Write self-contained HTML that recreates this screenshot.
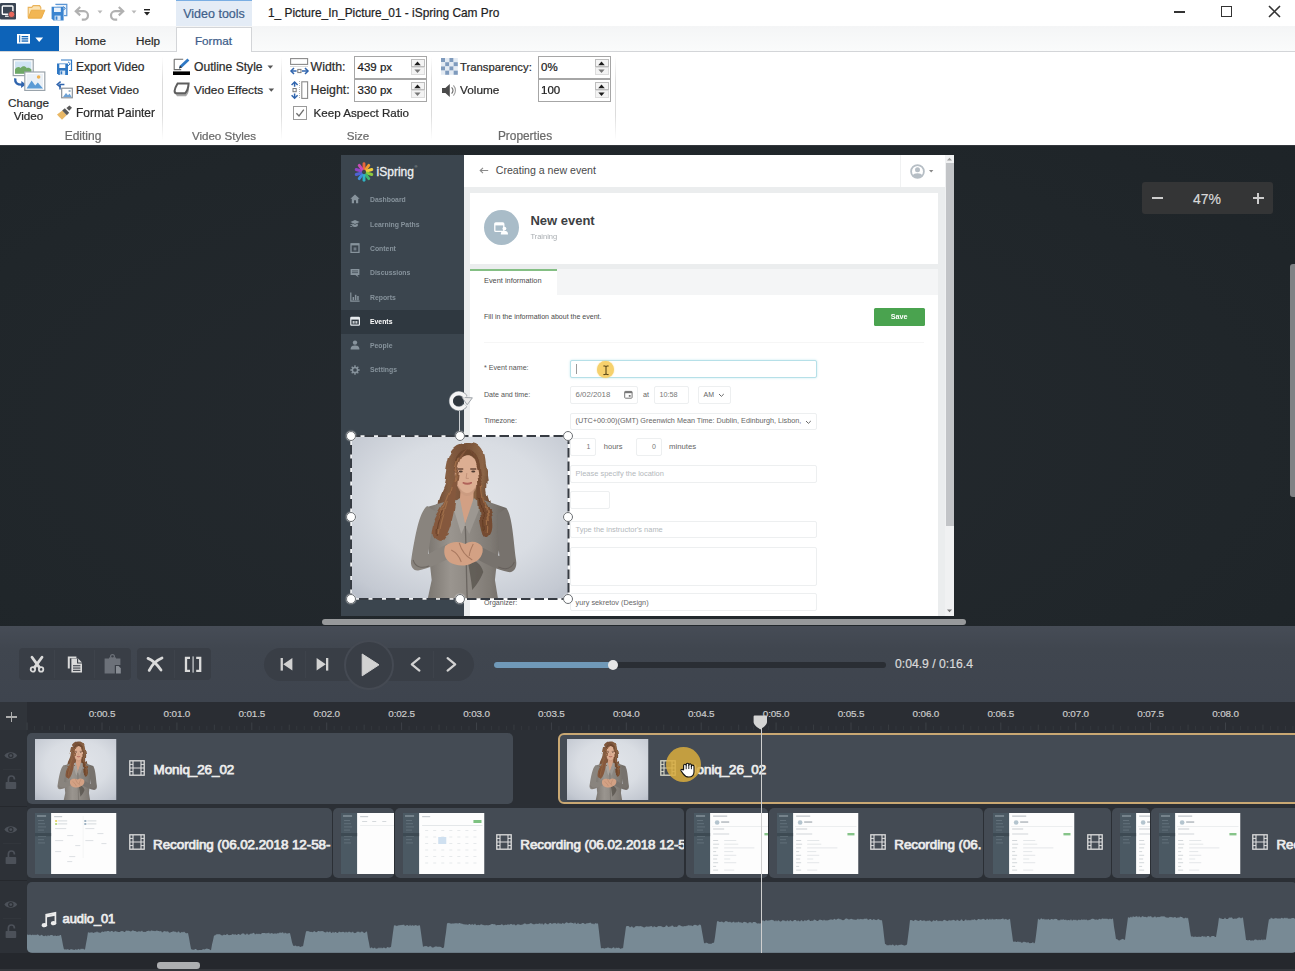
<!DOCTYPE html><html><head><meta charset="utf-8"><title>iSpring Cam Pro</title><style>html,body{margin:0;padding:0;background:#2b2f35}
body{width:1295px;height:971px;overflow:hidden;position:relative;font-family:"Liberation Sans",sans-serif;}
#r{position:absolute;left:0;top:0;width:1295px;height:971px;overflow:hidden}
#r div,#r svg{position:absolute;}
#r svg{overflow:visible}
#rb div{-webkit-text-stroke:.22px}
</style></head><body><svg width="0" height="0" style="position:absolute"><defs><symbol id="woman" viewBox="0 0 217 163" preserveAspectRatio="none">
<defs><radialGradient id="wbg" cx="52%" cy="42%" r="78%"><stop offset="0" stop-color="#e2e5ea"/><stop offset="0.5" stop-color="#d9dde3"/><stop offset="0.85" stop-color="#c4c9d2"/><stop offset="1" stop-color="#b4bac5"/></radialGradient>
<linearGradient id="shirt" x1="0" x2="1"><stop offset="0" stop-color="#7a756f"/><stop offset="0.3" stop-color="#9a958f"/><stop offset="0.55" stop-color="#8e8983"/><stop offset="0.8" stop-color="#807b75"/><stop offset="1" stop-color="#6c6762"/></linearGradient>
<linearGradient id="hair" x1="0" x2="1"><stop offset="0" stop-color="#5f3f2c"/><stop offset="0.3" stop-color="#875f43"/><stop offset="0.55" stop-color="#765037"/><stop offset="0.8" stop-color="#8c6546"/><stop offset="1" stop-color="#5a3b29"/></linearGradient>
<filter id="wavy" x="-10%" y="-5%" width="120%" height="110%"><feTurbulence type="fractalNoise" baseFrequency="0.035 0.06" numOctaves="2" seed="4" result="n"/><feDisplacementMap in="SourceGraphic" in2="n" scale="7" xChannelSelector="R" yChannelSelector="G"/></filter><filter id="wsoft" x="-5%" y="-5%" width="110%" height="110%"><feGaussianBlur stdDeviation="0.7"/></filter></defs>
<rect width="217" height="163" fill="url(#wbg)"/>
<g filter="url(#wsoft)">
<!-- hair back -->
<path filter="url(#wavy)" d="M115.5 7 C125 6 132 12 133 24 C134 34 137.5 42 136 50 C135 58 141 64 139.5 72 C138.5 80 145 87 143 96 C141 103 135 104 131 101 L127 70 L104 70 C100 86 97 100 91 107 C83 108 75 102 77.5 92 C78.5 84 85 77 86.5 67 C87.5 59 93.5 51 94.5 44 C95.5 36 97 28 98.5 22 C101 12 108 7 115.5 7Z" fill="url(#hair)"/>
<!-- torso -->
<path d="M100 64 L76 71 C74 90 78 120 80.5 144 L76.5 163 L146.7 163 L143.6 144 C146 120 152 90 155 72 L132 64Z" fill="url(#shirt)"/>
<!-- neck / chest -->
<path d="M109.5 50 L108.5 66 L113.5 89 L122 68 L122.5 50Z" fill="#d2a084"/>
<path d="M108.5 62 L101 68 L110 98 L114 89Z" fill="#a9a49e"/><path d="M122.5 62 L130 68 L118 98 L113.5 89Z" fill="#9c9791"/>
<path d="M114 90 C115 110 115 140 116 163" stroke="#6a6560" stroke-width="1.3" fill="none"/>
<!-- shadow fold below hands -->
<path d="M116 122 C124 124 130 128 132 136 C128 146 124 150 121 154 C120 144 118 134 116 122Z" fill="#55504b" opacity=".75"/>
<!-- face -->
<ellipse cx="115.8" cy="38" rx="12.2" ry="19" fill="#dcae92"/>
<path d="M104 40 C106 50 110 56 116 57.5 C122 56 126 50 127.6 40 C127 52 122 60 116 60 C110 60 105 52 104 40Z" fill="#c99a80" opacity=".7"/>
<path d="M106 33 h6 M119 33 h6" stroke="#6a4a3a" stroke-width="1.5"/>
<ellipse cx="109.5" cy="35.6" rx="2" ry="1" fill="#4f3a30"/><ellipse cx="122" cy="35.6" rx="2" ry="1" fill="#4f3a30"/>
<path d="M111.5 46.6 Q116 49.4 120.5 46.6 Q116 48 111.5 46.6Z" stroke="#b0635a" stroke-width="1.3" fill="#b0635a"/>
<path d="M115.6 37 L114.8 42.4 L117.6 42.4" stroke="#c08f76" stroke-width="0.9" fill="none"/>
<!-- hair crown + front strands -->
<path d="M103.5 36 C102 24 106 14 116 13.5 C125 14 129.5 24 128.4 36 C127 26 124 20 118 19 C110 19 105.5 26 103.5 36Z" fill="#6c462e"/>
<g filter="url(#wavy)"><path d="M116 13 C111 16 106 22 104.5 32 C103 44 98 51 96 60 C93 70 83 79 81 92 C80 100 84 105 90 106 C97 100 100 88 102.5 76 C105 64 104 52 106 42 C107 30 110 20 116 13Z" fill="#85593d"/>
<path d="M117 13 C123 17 127 24 128 34 C129 44 132 51 133 60 C135 70 142 78 141 90 C140.4 98 137 101 133 100.5 C130 92 128 82 127.4 72 C126.6 62 127.6 52 126.6 42 C125.6 30 122 20 117 13Z" fill="#744c31"/>
<path d="M100 50 C97 62 91 72 88 84 M96 66 C93 78 89 88 88 98 M131 50 C132 62 136 72 137 84 M134 70 C136 80 137 88 136 96 M108 22 C105 30 104 38 103 46" stroke="#a8744c" stroke-width="1.2" fill="none" opacity=".75"/>
<path d="M92 74 C88 84 85 92 86 100 M129 60 C130 72 133 82 133 94" stroke="#5c351f" stroke-width="1" fill="none" opacity=".7"/></g>
<!-- arms / hands -->
<path d="M76 70 C68 76 64 100 60.3 122.5 C58.5 130 62 135 67 134.5 C78 132 90 127 100 121 L96 108 C88 112 81 116 77 118 C79 104 82 86 85 76Z" fill="#89847e"/>
<path d="M155 72 C161 80 162 104 164.7 124.5 C166 132 162 137 157 136 C146 134 134 128 124 122 L128 110 C136 114 144 118 148 120 C147 106 146 88 146 78Z" fill="#77726d"/>
<path d="M62 124 C64 131 70 133 78 130 M163 126 C160 133 154 134 147 131" stroke="#5f5a55" stroke-width="1" fill="none" opacity=".7"/>
<path d="M94 110 C100 105 108 105 114 108 C120 104 128 106 131 111 C133 118 128 125 121 127 C114 131 104 130 98 126 C93 122 92 115 94 110Z" fill="#d3a184"/>
<path d="M108 107 C110 114 114 120 121 124 M100 114 C104 116 108 120 110 126 M122 108 C120 112 118 116 118 120" stroke="#a97960" stroke-width="1" fill="none"/>
</g>
</symbol><symbol id="shDash" viewBox="0 0 81 61" preserveAspectRatio="none"><rect width="81" height="61" fill="#fdfdfd"/><rect width="16" height="61" fill="#4b5963"/><rect x="2" y="2" width="9" height="2" fill="#75828b"/><rect x="3" y="7.0" width="6" height="1" fill="#62707a"/><rect x="3" y="10.2" width="7" height="1" fill="#62707a"/><rect x="3" y="13.4" width="8" height="1" fill="#62707a"/><rect x="3" y="16.6" width="6" height="1" fill="#62707a"/><rect x="3" y="19.8" width="7" height="1" fill="#62707a"/><rect x="3" y="23.0" width="8" height="1" fill="#62707a"/><rect x="3" y="26.2" width="6" height="1" fill="#62707a"/><rect x="3" y="29.4" width="7" height="1" fill="#62707a"/><rect x="0" y="20" width="16" height="3.2" fill="#3d4a53"/><rect x="19" y="3" width="8" height="1.2" fill="#c9ced2"/><rect x="20" y="7" width="2" height="2" fill="#e9d66b"/><rect x="23" y="7.4" width="9" height="1" fill="#d5d9dc"/><rect x="20" y="10" width="2" height="2" fill="#b9d98c"/><rect x="23" y="10.4" width="9" height="1" fill="#d5d9dc"/><rect x="49" y="7" width="2" height="2" fill="#9fb2c2"/><rect x="52" y="7.4" width="9" height="1" fill="#d5d9dc"/><rect x="49" y="10" width="2" height="2" fill="#9fb2c2"/><rect x="52" y="10.4" width="9" height="1" fill="#d5d9dc"/><rect x="20" y="15" width="11" height="1.1" fill="#dfe2e5"/><rect x="50" y="15" width="9" height="1.1" fill="#dfe2e5"/><rect x="32" y="22" width="6" height="1.1" fill="#dfe2e5"/><rect x="62" y="20" width="6" height="1.1" fill="#dfe2e5"/><rect x="20" y="27" width="8" height="1.1" fill="#dfe2e5"/><rect x="50" y="27" width="8" height="1.1" fill="#dfe2e5"/><rect x="40" y="32" width="5" height="1.1" fill="#dfe2e5"/><rect x="66" y="30" width="5" height="1.1" fill="#dfe2e5"/><rect x="20" y="38" width="6" height="1.1" fill="#dfe2e5"/><rect x="34" y="43" width="6" height="1.1" fill="#dfe2e5"/><rect x="32" y="48" width="5" height="1.1" fill="#dfe2e5"/><rect x="47.5" y="3" width="0.6" height="42" fill="#eef0f1"/></symbol><symbol id="shCal" viewBox="0 0 81 61" preserveAspectRatio="none"><rect width="81" height="61" fill="#fdfdfd"/><rect width="16" height="61" fill="#4b5963"/><rect x="2" y="2" width="9" height="2" fill="#75828b"/><rect x="3" y="7.0" width="6" height="1" fill="#62707a"/><rect x="3" y="10.2" width="7" height="1" fill="#62707a"/><rect x="3" y="13.4" width="8" height="1" fill="#62707a"/><rect x="3" y="16.6" width="6" height="1" fill="#62707a"/><rect x="3" y="19.8" width="7" height="1" fill="#62707a"/><rect x="3" y="23.0" width="8" height="1" fill="#62707a"/><rect x="3" y="26.2" width="6" height="1" fill="#62707a"/><rect x="3" y="29.4" width="7" height="1" fill="#62707a"/><rect x="0" y="20" width="16" height="3.2" fill="#3d4a53"/><rect x="19" y="3" width="8" height="1.2" fill="#c9ced2"/><rect x="70" y="7" width="8" height="3" fill="#7dc281"/><rect x="19" y="12" width="60" height="1" fill="#e4e7e9"/><rect x="22" y="17.0" width="3" height="1" fill="#e6e9eb"/><rect x="30" y="17.0" width="3" height="1" fill="#e6e9eb"/><rect x="38" y="17.0" width="3" height="1" fill="#e6e9eb"/><rect x="46" y="17.0" width="3" height="1" fill="#e6e9eb"/><rect x="54" y="17.0" width="3" height="1" fill="#e6e9eb"/><rect x="62" y="17.0" width="3" height="1" fill="#e6e9eb"/><rect x="70" y="17.0" width="3" height="1" fill="#e6e9eb"/><rect x="22" y="23.5" width="3" height="1" fill="#e6e9eb"/><rect x="30" y="23.5" width="3" height="1" fill="#e6e9eb"/><rect x="38" y="23.5" width="3" height="1" fill="#e6e9eb"/><rect x="46" y="23.5" width="3" height="1" fill="#e6e9eb"/><rect x="54" y="23.5" width="3" height="1" fill="#e6e9eb"/><rect x="62" y="23.5" width="3" height="1" fill="#e6e9eb"/><rect x="70" y="23.5" width="3" height="1" fill="#e6e9eb"/><rect x="22" y="30.0" width="3" height="1" fill="#e6e9eb"/><rect x="30" y="30.0" width="3" height="1" fill="#e6e9eb"/><rect x="38" y="30.0" width="3" height="1" fill="#e6e9eb"/><rect x="46" y="30.0" width="3" height="1" fill="#e6e9eb"/><rect x="54" y="30.0" width="3" height="1" fill="#e6e9eb"/><rect x="62" y="30.0" width="3" height="1" fill="#e6e9eb"/><rect x="70" y="30.0" width="3" height="1" fill="#e6e9eb"/><rect x="22" y="36.5" width="3" height="1" fill="#e6e9eb"/><rect x="30" y="36.5" width="3" height="1" fill="#e6e9eb"/><rect x="38" y="36.5" width="3" height="1" fill="#e6e9eb"/><rect x="46" y="36.5" width="3" height="1" fill="#e6e9eb"/><rect x="54" y="36.5" width="3" height="1" fill="#e6e9eb"/><rect x="62" y="36.5" width="3" height="1" fill="#e6e9eb"/><rect x="70" y="36.5" width="3" height="1" fill="#e6e9eb"/><rect x="22" y="43.0" width="3" height="1" fill="#e6e9eb"/><rect x="30" y="43.0" width="3" height="1" fill="#e6e9eb"/><rect x="38" y="43.0" width="3" height="1" fill="#e6e9eb"/><rect x="46" y="43.0" width="3" height="1" fill="#e6e9eb"/><rect x="54" y="43.0" width="3" height="1" fill="#e6e9eb"/><rect x="62" y="43.0" width="3" height="1" fill="#e6e9eb"/><rect x="70" y="43.0" width="3" height="1" fill="#e6e9eb"/><rect x="22" y="49.5" width="3" height="1" fill="#e6e9eb"/><rect x="30" y="49.5" width="3" height="1" fill="#e6e9eb"/><rect x="38" y="49.5" width="3" height="1" fill="#e6e9eb"/><rect x="46" y="49.5" width="3" height="1" fill="#e6e9eb"/><rect x="54" y="49.5" width="3" height="1" fill="#e6e9eb"/><rect x="62" y="49.5" width="3" height="1" fill="#e6e9eb"/><rect x="70" y="49.5" width="3" height="1" fill="#e6e9eb"/><rect x="35" y="24" width="8" height="7" fill="#cfe0f0"/></symbol><symbol id="shList" viewBox="0 0 81 61" preserveAspectRatio="none"><rect width="81" height="61" fill="#fdfdfd"/><rect width="16" height="61" fill="#4b5963"/><rect x="2" y="2" width="9" height="2" fill="#75828b"/><rect x="3" y="7.0" width="6" height="1" fill="#62707a"/><rect x="3" y="10.2" width="7" height="1" fill="#62707a"/><rect x="3" y="13.4" width="8" height="1" fill="#62707a"/><rect x="3" y="16.6" width="6" height="1" fill="#62707a"/><rect x="3" y="19.8" width="7" height="1" fill="#62707a"/><rect x="3" y="23.0" width="8" height="1" fill="#62707a"/><rect x="3" y="26.2" width="6" height="1" fill="#62707a"/><rect x="3" y="29.4" width="7" height="1" fill="#62707a"/><rect x="0" y="20" width="16" height="3.2" fill="#3d4a53"/><rect x="19" y="3" width="8" height="1.2" fill="#c9ced2"/><rect x="21" y="8" width="5" height="1" fill="#d5d9dc"/><rect x="31" y="8" width="4" height="1" fill="#d5d9dc"/><rect x="41" y="8" width="4" height="1" fill="#d5d9dc"/><rect x="19" y="12" width="60" height="0.8" fill="#e9ebed"/></symbol><symbol id="shForm" viewBox="0 0 81 61" preserveAspectRatio="none"><rect width="81" height="61" fill="#fdfdfd"/><rect width="16" height="61" fill="#4b5963"/><rect x="2" y="2" width="9" height="2" fill="#75828b"/><rect x="3" y="7.0" width="6" height="1" fill="#62707a"/><rect x="3" y="10.2" width="7" height="1" fill="#62707a"/><rect x="3" y="13.4" width="8" height="1" fill="#62707a"/><rect x="3" y="16.6" width="6" height="1" fill="#62707a"/><rect x="3" y="19.8" width="7" height="1" fill="#62707a"/><rect x="3" y="23.0" width="8" height="1" fill="#62707a"/><rect x="3" y="26.2" width="6" height="1" fill="#62707a"/><rect x="3" y="29.4" width="7" height="1" fill="#62707a"/><rect x="0" y="20" width="16" height="3.2" fill="#3d4a53"/><rect x="19" y="2.5" width="14" height="1.3" fill="#c3c8cc"/><circle cx="23" cy="9.5" r="2.3" fill="#b4c4ce"/><rect x="27" y="8.3" width="8" height="1.5" fill="#b4babf"/><rect x="18" y="13" width="61" height="1" fill="#eceeef"/><rect x="19" y="15.5" width="11" height="1" fill="#c9ced2"/><rect x="70" y="20" width="7" height="2.4" fill="#86c489"/><rect x="19" y="20.5" width="16" height="1" fill="#d2d6d9"/><rect x="19" y="27.0" width="5" height="1" fill="#d3d7da"/><rect x="30" y="27.0" width="12" height="1" fill="#e4e7e9"/><rect x="19" y="30.7" width="6" height="1" fill="#d3d7da"/><rect x="30" y="30.7" width="14" height="1" fill="#e4e7e9"/><rect x="19" y="34.4" width="5" height="1" fill="#d3d7da"/><rect x="30" y="34.4" width="30" height="1" fill="#e4e7e9"/><rect x="19" y="38.1" width="3" height="1" fill="#d3d7da"/><rect x="30" y="38.1" width="9" height="1" fill="#e4e7e9"/><rect x="19" y="41.8" width="5" height="1" fill="#d3d7da"/><rect x="30" y="41.8" width="12" height="1" fill="#e4e7e9"/><rect x="19" y="45.5" width="4" height="1" fill="#d3d7da"/><rect x="30" y="45.5" width="6" height="1" fill="#e4e7e9"/><rect x="19" y="49.2" width="5" height="1" fill="#d3d7da"/><rect x="30" y="49.2" width="12" height="1" fill="#e4e7e9"/><rect x="19" y="52.9" width="3" height="1" fill="#d3d7da"/><rect x="19" y="56.6" width="5" height="1" fill="#d3d7da"/><rect x="30" y="56.6" width="10" height="1" fill="#e4e7e9"/></symbol></defs></svg><div id="r">
<div style="left:0px;top:145px;width:1295px;height:481px;background:radial-gradient(ellipse 80% 100% at 45% 60%,#252a2f,#20262a 65%,#1d2327)"></div>
<div style="left:0px;top:145px;width:1295px;height:1px;background:#33373c"></div>
<div style="left:1142px;top:182px;width:131px;height:31.5px;background:#343536;border-radius:3px"></div>
<div style="left:1152px;top:197.4px;width:11.2px;height:2px;background:#cdcdcd"></div>
<div style="left:1057px;top:189px;height:20px;line-height:20px;font-size:14px;color:#d8d8d8;white-space:nowrap;width:300px;text-align:center;-webkit-text-stroke:.2px #d8d8d8;">47%</div>
<div style="left:1252.8px;top:197.4px;width:10.8px;height:2px;background:#cdcdcd"></div><div style="left:1257.2px;top:193px;width:2px;height:10.8px;background:#cdcdcd"></div>
<div style="left:0;top:0;width:1295px;height:971px;filter:blur(.35px)"><div style="left:341px;top:155px;width:613px;height:461px;background:#fff"></div><div style="left:341px;top:155px;width:123px;height:461px;background:#3b454e"></div><div style="left:341px;top:310px;width:123px;height:24px;background:#2f3840"></div><svg style="left:353.8px;top:161.8px;filter:blur(.45px);" width="20" height="20" viewBox="0 0 20 20"><path d="M10.0 6.6 L10.0 1.8" stroke="#e8663c" stroke-width="2.9" stroke-linecap="round"/><path d="M12.0 7.2 L14.8 3.4" stroke="#f09a2e" stroke-width="2.9" stroke-linecap="round"/><path d="M13.2 8.9 L17.8 7.5" stroke="#f2cf3e" stroke-width="2.9" stroke-linecap="round"/><path d="M13.2 11.1 L17.8 12.5" stroke="#8ccb3e" stroke-width="2.9" stroke-linecap="round"/><path d="M12.0 12.8 L14.8 16.6" stroke="#3fb56e" stroke-width="2.9" stroke-linecap="round"/><path d="M10.0 13.4 L10.0 18.2" stroke="#2fb3c4" stroke-width="2.9" stroke-linecap="round"/><path d="M8.0 12.8 L5.2 16.6" stroke="#3f8fdc" stroke-width="2.9" stroke-linecap="round"/><path d="M6.8 11.1 L2.2 12.5" stroke="#4f62d2" stroke-width="2.9" stroke-linecap="round"/><path d="M6.8 8.9 L2.2 7.5" stroke="#8f46c4" stroke-width="2.9" stroke-linecap="round"/><path d="M8.0 7.2 L5.2 3.4" stroke="#c84cb4" stroke-width="2.9" stroke-linecap="round"/></svg><div style="left:376.6px;top:162px;height:20px;line-height:20px;font-size:12px;color:#eef0f2;white-space:nowrap;-webkit-text-stroke:.3px #eef0f2;">iSpring</div><div style="left:414.5px;top:157px;height:20px;line-height:20px;font-size:4px;color:#aab2b8;white-space:nowrap;">&#174;</div><svg style="left:350px;top:194px;" width="10" height="10" viewBox="0 0 10 10"><path d="M5 0.6 L0.4 4.8 h1.4 v4.4 h2.2 v-3 h2 v3 h2.2 v-4.4 h1.4z" fill="#87939c"/></svg><div style="left:370px;top:189.5px;height:20px;line-height:20px;font-size:6.85px;color:#87939c;white-space:nowrap;font-weight:700;filter:blur(.45px);">Dashboard</div><svg style="left:350px;top:219px;" width="10" height="10" viewBox="0 0 10 10"><path d="M0.4 3 L5 1 L9.6 3 L5 5z" fill="#87939c"/><path d="M2.2 4.6 v2.4 c1.8 1.2 3.8 1.2 5.6 0 v-2.4 l-2.8 1.2z" fill="#87939c"/><rect x="0.6" y="5" width="1.6" height="0.8" fill="#87939c"/><rect x="0.2" y="7" width="2" height="0.8" fill="#87939c"/></svg><div style="left:370px;top:214.5px;height:20px;line-height:20px;font-size:6.85px;color:#87939c;white-space:nowrap;font-weight:700;filter:blur(.45px);">Learning Paths</div><svg style="left:350px;top:243.4px;" width="10" height="10" viewBox="0 0 10 10"><path d="M1 1 h8 v8.4 h-8z" fill="none" stroke="#87939c" stroke-width="1.3"/><rect x="1" y="0.4" width="8" height="2" fill="#87939c"/><rect x="3.6" y="4.4" width="2.8" height="3" fill="#87939c" opacity=".7"/></svg><div style="left:370px;top:238.9px;height:20px;line-height:20px;font-size:6.85px;color:#87939c;white-space:nowrap;font-weight:700;filter:blur(.45px);">Content</div><svg style="left:350px;top:267.5px;" width="10" height="10" viewBox="0 0 10 10"><path d="M0.6 1 h8.8 v6 h-2 l1.4 2.4 l-3.4 -2.4 h-4.8z" fill="#87939c"/><rect x="2" y="2.6" width="6" height="0.7" fill="#3b454e"/><rect x="2" y="4.4" width="6" height="0.7" fill="#3b454e"/></svg><div style="left:370px;top:263.0px;height:20px;line-height:20px;font-size:6.85px;color:#87939c;white-space:nowrap;font-weight:700;filter:blur(.45px);">Discussions</div><svg style="left:350px;top:292px;" width="10" height="10" viewBox="0 0 10 10"><path d="M0.8 0.6 v8.6 h8.8" fill="none" stroke="#87939c" stroke-width="1.2"/><rect x="2.6" y="5" width="1.5" height="3.2" fill="#87939c"/><rect x="4.9" y="2.8" width="1.5" height="5.4" fill="#87939c"/><rect x="7.2" y="4" width="1.5" height="4.2" fill="#87939c"/></svg><div style="left:370px;top:287.5px;height:20px;line-height:20px;font-size:6.85px;color:#87939c;white-space:nowrap;font-weight:700;filter:blur(.45px);">Reports</div><svg style="left:350px;top:316.3px;" width="10" height="10" viewBox="0 0 10 10"><rect x="0.8" y="1.4" width="8.6" height="7.8" rx="0.8" fill="none" stroke="#e8ecef" stroke-width="1.2"/><rect x="0.8" y="1.4" width="8.6" height="2.2" fill="#e8ecef"/><rect x="2.6" y="5" width="2" height="2.6" fill="#e8ecef" opacity=".8"/><rect x="5.4" y="5" width="2" height="2.6" fill="#e8ecef" opacity=".8"/></svg><div style="left:370px;top:311.8px;height:20px;line-height:20px;font-size:6.85px;color:#fff;white-space:nowrap;font-weight:700;filter:blur(.45px);">Events</div><svg style="left:350px;top:340px;" width="10" height="10" viewBox="0 0 10 10"><circle cx="5" cy="2.6" r="2.2" fill="#87939c"/><path d="M0.6 9.4 c0 -3.4 2 -4 4.4 -4 s4.4 .6 4.4 4z" fill="#87939c"/></svg><div style="left:370px;top:335.5px;height:20px;line-height:20px;font-size:6.85px;color:#87939c;white-space:nowrap;font-weight:700;filter:blur(.45px);">People</div><svg style="left:350px;top:364.8px;" width="10" height="10" viewBox="0 0 10 10"><circle cx="5" cy="5" r="2.6" fill="none" stroke="#87939c" stroke-width="1.5"/><path d="M5 0.3 v1.8 M5 7.9 v1.8 M0.3 5 h1.8 M7.9 5 h1.8 M1.7 1.7 l1.2 1.2 M7.1 7.1 l1.2 1.2 M8.3 1.7 l-1.2 1.2 M1.7 8.3 l1.2 -1.2" stroke="#87939c" stroke-width="1.4"/></svg><div style="left:370px;top:360.3px;height:20px;line-height:20px;font-size:6.85px;color:#87939c;white-space:nowrap;font-weight:700;filter:blur(.45px);">Settings</div><svg style="left:479px;top:166.5px;" width="10" height="7" viewBox="0 0 10 7"><path d="M9.2 3.5 H1.4 M4 0.8 L1.2 3.5 L4 6.2" fill="none" stroke="#8a8a8a" stroke-width="1.1"/></svg><div style="left:495.8px;top:159.7px;height:20px;line-height:20px;font-size:10.6px;color:#4a4a4a;white-space:nowrap;">Creating a new event</div><div style="left:900px;top:155px;width:1px;height:32px;background:#f0f1f2"></div><svg style="left:910px;top:163.5px;" width="15" height="15" viewBox="0 0 15 15"><circle cx="7.5" cy="7.5" r="6.4" fill="#fff" stroke="#b6bec5" stroke-width="1.8"/><circle cx="7.5" cy="5.8" r="2.5" fill="#b6bec5"/><path d="M2.8 11.6 c.6 -3 8.8 -3 9.4 0 c-2.4 2.6 -7 2.6 -9.4 0z" fill="#b6bec5"/></svg><svg style="left:929px;top:169.5px;" width="5" height="3" viewBox="0 0 5 3"><path d="M0 0 h4.4 l-2.2 2.4z" fill="#888"/></svg><div style="left:464px;top:187px;width:481px;height:429px;background:#ebedee"></div><div style="left:470px;top:193px;width:468px;height:70.5px;background:#fff"></div><div style="left:483.5px;top:210.2px;width:35px;height:35px;background:#a9bcc8;border-radius:50%"></div><svg style="left:494px;top:221px;" width="15" height="14" viewBox="0 0 15 14"><rect x="0.8" y="2" width="9" height="8.4" rx="1" fill="none" stroke="#fff" stroke-width="1.3"/><rect x="0.8" y="2" width="9" height="2.4" fill="#fff"/><circle cx="10.4" cy="7.6" r="1.9" fill="#fff"/><path d="M6.8 13.4 c0 -3 1.6 -3.4 3.6 -3.4 s3.6 .4 3.6 3.4z" fill="#fff"/></svg><div style="left:530.4px;top:211px;height:20px;line-height:20px;font-size:13px;color:#3c4043;white-space:nowrap;font-weight:700;">New event</div><div style="left:530.4px;top:227px;height:20px;line-height:20px;font-size:7.5px;color:#a8adb1;white-space:nowrap;filter:blur(.3px);">Training</div><div style="left:470px;top:268.5px;width:468px;height:26px;background:#f4f5f6"></div><div style="left:470px;top:268.5px;width:87px;height:26.5px;background:#fff;border-top:2.2px solid #84bf84;box-sizing:border-box"></div><div style="left:484px;top:271px;height:20px;line-height:20px;font-size:7.4px;color:#4a4a4a;white-space:nowrap;">Event information</div><div style="left:470px;top:294.5px;width:468px;height:321.5px;background:#fff"></div><div style="left:484px;top:306.7px;height:20px;line-height:20px;font-size:7.05px;color:#4a4a4a;white-space:nowrap;">Fill in the information about the event.</div><div style="left:874px;top:307.6px;width:50.5px;height:18.2px;background:#4aa34f;border-radius:1.5px"></div><div style="left:749.2px;top:306.8px;height:20px;line-height:20px;font-size:7.2px;color:#fff;white-space:nowrap;font-weight:700;width:300px;text-align:center;">Save</div><div style="left:484px;top:341.5px;width:440px;height:1px;background:#f6f6f6"></div><div style="left:484px;top:358px;height:20px;line-height:20px;font-size:7.1px;color:#555;white-space:nowrap;">* Event name:</div><div style="left:484px;top:384.7px;height:20px;line-height:20px;font-size:7.1px;color:#555;white-space:nowrap;">Date and time:</div><div style="left:484px;top:410.8px;height:20px;line-height:20px;font-size:7.1px;color:#555;white-space:nowrap;">Timezone:</div><div style="left:484px;top:593px;height:20px;line-height:20px;font-size:7.1px;color:#555;white-space:nowrap;">Organizer:</div><div style="left:570px;top:359.5px;width:247px;height:18.3px;border:1px solid #b6e0e8;border-radius:2px;box-sizing:border-box;background:#fff;box-shadow:0 0 2.5px #c4e8ef"></div><div style="left:575.6px;top:364px;width:0.8px;height:9.5px;background:#999"></div><div style="left:570px;top:386px;width:67.5px;height:18px;border:1px solid #edeff0;border-radius:2px;box-sizing:border-box;background:#fff;"></div><div style="left:575.6px;top:385px;height:20px;line-height:20px;font-size:7.8px;color:#777;white-space:nowrap;">6/02/2018</div><svg style="left:624px;top:390px;" width="9" height="9" viewBox="0 0 9 9"><rect x="0.7" y="1.4" width="7.4" height="6.8" rx="0.8" fill="none" stroke="#777" stroke-width="1"/><rect x="0.7" y="1.4" width="7.4" height="1.8" fill="#777"/><rect x="4.8" y="5" width="1.8" height="1.8" fill="#777"/></svg><div style="left:643px;top:385px;height:20px;line-height:20px;font-size:7.2px;color:#666;white-space:nowrap;">at</div><div style="left:653.8px;top:386px;width:35px;height:18px;border:1px solid #edeff0;border-radius:2px;box-sizing:border-box;background:#fff;"></div><div style="left:659.5px;top:385px;height:20px;line-height:20px;font-size:7.25px;color:#777;white-space:nowrap;">10:58</div><div style="left:698px;top:386px;width:32.5px;height:18px;border:1px solid #edeff0;border-radius:2px;box-sizing:border-box;background:#fff;"></div><div style="left:703.5px;top:385px;height:20px;line-height:20px;font-size:7px;color:#666;white-space:nowrap;">AM</div><svg style="left:718px;top:393px;" width="7" height="5" viewBox="0 0 7 5"><path d="M1 1 L3.4 3.4 L5.8 1" fill="none" stroke="#666" stroke-width="1"/></svg><div style="left:570px;top:412.7px;width:247px;height:17.3px;border:1px solid #edeff0;border-radius:2px;box-sizing:border-box;background:#fff;"></div><div style="left:575.6px;top:411.3px;height:20px;line-height:20px;font-size:7.23px;color:#666;white-space:nowrap;">(UTC+00:00)(GMT) Greenwich Mean Time: Dublin, Edinburgh, Lisbon,</div><svg style="left:805px;top:419.5px;" width="7" height="5" viewBox="0 0 7 5"><path d="M1 1 L3.4 3.4 L5.8 1" fill="none" stroke="#666" stroke-width="1"/></svg><div style="left:570px;top:438.4px;width:26px;height:18px;border:1px solid #edeff0;border-radius:2px;box-sizing:border-box;background:#fff;"></div><div style="left:586.5px;top:437.4px;height:20px;line-height:20px;font-size:7px;color:#777;white-space:nowrap;">1</div><div style="left:603.8px;top:437.4px;height:20px;line-height:20px;font-size:7.5px;color:#666;white-space:nowrap;">hours</div><div style="left:636px;top:438.4px;width:26px;height:18px;border:1px solid #edeff0;border-radius:2px;box-sizing:border-box;background:#fff;"></div><div style="left:652px;top:437.4px;height:20px;line-height:20px;font-size:7px;color:#777;white-space:nowrap;">0</div><div style="left:669px;top:437.4px;height:20px;line-height:20px;font-size:7.75px;color:#666;white-space:nowrap;">minutes</div><div style="left:570px;top:465px;width:247px;height:17.6px;border:1px solid #edeff0;border-radius:2px;box-sizing:border-box;background:#fff;"></div><div style="left:575.6px;top:463.8px;height:20px;line-height:20px;font-size:7.46px;color:#b3b8bc;white-space:nowrap;">Please specify the location</div><div style="left:570px;top:491px;width:40.2px;height:18.3px;border:1px solid #edeff0;border-radius:2px;box-sizing:border-box;background:#fff;"></div><div style="left:570px;top:520.5px;width:247px;height:17.6px;border:1px solid #edeff0;border-radius:2px;box-sizing:border-box;background:#fff;"></div><div style="left:575.6px;top:519.5px;height:20px;line-height:20px;font-size:7.46px;color:#b3b8bc;white-space:nowrap;">Type the instructor's name</div><div style="left:570px;top:547px;width:247px;height:39px;border:1px solid #edeff0;border-radius:2px;box-sizing:border-box;background:#fff;"></div><div style="left:570px;top:593.4px;width:247px;height:17.6px;border:1px solid #edeff0;border-radius:2px;box-sizing:border-box;background:#fff;"></div><div style="left:575.6px;top:592.8px;height:20px;line-height:20px;font-size:7.3px;color:#666;white-space:nowrap;">yury sekretov (Design)</div><div style="left:945px;top:155px;width:9px;height:461px;background:#f0f1f2"></div><div style="left:946px;top:162.5px;width:8px;height:363px;background:#c2c4c7"></div><svg style="left:946px;top:157px;" width="7" height="4" viewBox="0 0 7 4"><path d="M1 3.4 L3.5 .8 L6 3.4z" fill="#999"/></svg><svg style="left:946px;top:609px;" width="7" height="4" viewBox="0 0 7 4"><path d="M1 .6 L3.5 3.2 L6 .6z" fill="#777"/></svg><div style="left:596.7px;top:361.2px;width:17px;height:17px;background:#f6cd5e;border-radius:50%;opacity:.9;box-shadow:0 0 1.5px #f6cd5e"></div><svg style="left:601.5px;top:364.5px;" width="8" height="11" viewBox="0 0 8 11"><path d="M1.4 1 h1.6 q1 0 1 1 v6.6 q0 1 -1 1 h-1.6 M6.6 1 h-1.6 q-1 0 -1 1 M6.6 9.6 h-1.6 q-1 0 -1 -1" fill="none" stroke="#4a3a10" stroke-width="1"/></svg></div>
<svg style="left:351px;top:436px;filter:blur(.5px)" width="217.5" height="163"><use href="#woman" width="217.5" height="163"/></svg>
<div style="left:349.8px;top:434.8px;width:220px;height:165.4px;border:2px solid rgba(255,255,255,.7);box-sizing:border-box"></div>
<svg style="left:348px;top:433px;" width="224" height="170" viewBox="0 0 224 170"><rect x="3" y="3" width="217.5" height="163" fill="none" stroke="#363b42" stroke-width="2" stroke-dasharray="9.5 4"/></svg>
<div style="left:458.6px;top:409px;width:1px;height:24px;background:#c9cdd0"></div>
<svg style="left:446px;top:389px;" width="30" height="24" viewBox="0 0 30 24"><path d="M19.4 8.2 A7.6 7.6 0 1 0 19.2 16.2" fill="none" stroke="#7d848b" stroke-width="4.8"/><path d="M16 8.4 L26.4 8.8 L21.2 15.800z" fill="#e9e9e9" stroke="#a0a5aa" stroke-width="1"/><path d="M19.400 8.200 A7.600 7.600 0 1 0 19.200 16.200" fill="none" stroke="#f4f4f4" stroke-width="3.600"/><circle cx="12" cy="12" r="5" fill="#2f363d"/></svg>
<div style="left:346px;top:431px;width:10px;height:10px;background:#fff;border:1.6px solid #6b6f73;border-radius:50%;box-sizing:border-box;box-shadow:0 0 1.5px rgba(255,255,255,.8)"></div>
<div style="left:454.6px;top:431px;width:10px;height:10px;background:#fff;border:1.6px solid #6b6f73;border-radius:50%;box-sizing:border-box;box-shadow:0 0 1.5px rgba(255,255,255,.8)"></div>
<div style="left:563.4px;top:431px;width:10px;height:10px;background:#fff;border:1.6px solid #6b6f73;border-radius:50%;box-sizing:border-box;box-shadow:0 0 1.5px rgba(255,255,255,.8)"></div>
<div style="left:346px;top:512px;width:10px;height:10px;background:#fff;border:1.6px solid #6b6f73;border-radius:50%;box-sizing:border-box;box-shadow:0 0 1.5px rgba(255,255,255,.8)"></div>
<div style="left:563.4px;top:512px;width:10px;height:10px;background:#fff;border:1.6px solid #6b6f73;border-radius:50%;box-sizing:border-box;box-shadow:0 0 1.5px rgba(255,255,255,.8)"></div>
<div style="left:346px;top:594px;width:10px;height:10px;background:#fff;border:1.6px solid #6b6f73;border-radius:50%;box-sizing:border-box;box-shadow:0 0 1.5px rgba(255,255,255,.8)"></div>
<div style="left:454.6px;top:594px;width:10px;height:10px;background:#fff;border:1.6px solid #6b6f73;border-radius:50%;box-sizing:border-box;box-shadow:0 0 1.5px rgba(255,255,255,.8)"></div>
<div style="left:563.4px;top:594px;width:10px;height:10px;background:#fff;border:1.6px solid #6b6f73;border-radius:50%;box-sizing:border-box;box-shadow:0 0 1.5px rgba(255,255,255,.8)"></div>
<div style="left:1290px;top:264px;width:8px;height:232.5px;background:#808285;border-radius:3px"></div>
<div style="left:322px;top:618.5px;width:644px;height:6.2px;background:#97999b;border-radius:3px"></div>
<div id="rb" style="left:0;top:0;width:1295px;height:145px"><div style="left:0px;top:0px;width:1295px;height:26px;background:#fff"></div>
<svg style="left:0px;top:3px;" width="17" height="17" viewBox="0 0 17 17"><rect x="0" y="0" width="16" height="16.5" rx="1" fill="#3a4553"/><rect x="2.3" y="3" width="10.6" height="8.2" rx="0.8" fill="none" stroke="#fff" stroke-width="1.4"/><rect x="5" y="12.6" width="5.4" height="1.2" fill="#fff"/><circle cx="11.6" cy="11.4" r="3.2" fill="#e8675c" stroke="#3a4553" stroke-width="0.8"/></svg>
<svg style="left:27px;top:4px;" width="19" height="16" viewBox="0 0 19 16"><path d="M1.2 13.6 V3.4 h3.6 l1.4 -1.8 h6.4 l1.2 1.8 v2.2" fill="#fbe3b4" stroke="#eab35a" stroke-width="1.1"/><path d="M1.2 14.2 L4.4 6.2 h13.4 l-3.4 8z" fill="#f2b654" stroke="#e9a840" stroke-width="0.9"/></svg>
<svg style="left:51px;top:3px;" width="17" height="18" viewBox="0 0 17 18"><path d="M4.4 1.4 h11.4 v11.2 h-2.8" fill="#e9f1fa" stroke="#5b95d3" stroke-width="1.2"/><path d="M12.2 3.6 l2.2 1.8 l-2.2 1.8" fill="none" stroke="#2f78c4" stroke-width="1"/><path d="M0.6 3.8 h12 v13.6 h-10.2 l-1.8 -1.8z" fill="#3a84d0"/><rect x="3" y="4.6" width="6.8" height="4.4" fill="#e9f1fa"/><rect x="3.6" y="12.6" width="6" height="4.8" fill="#d9e7f6"/><rect x="4.6" y="13.4" width="1.8" height="3.4" fill="#3a84d0"/></svg>
<svg style="left:74px;top:5.5px;" width="17" height="15" viewBox="0 0 17 15"><path d="M2.4 5.2 h7.4 a4.2 4.2 0 0 1 0 8.4 h-2" fill="none" stroke="#b1b1b1" stroke-width="2.2"/><path d="M6.2 1 L1.8 5.2 L6.2 9.4" fill="none" stroke="#b1b1b1" stroke-width="2.2"/></svg>
<svg style="left:97px;top:10px;" width="7" height="5" viewBox="0 0 7 5"><path d="M0.5 0.5 h5 l-2.5 3z" fill="#b9b9b9"/></svg>
<svg style="left:108px;top:5.5px;" width="17" height="15" viewBox="0 0 17 15"><path d="M14.6 5.2 h-7.4 a4.2 4.2 0 0 0 0 8.4 h2" fill="none" stroke="#b1b1b1" stroke-width="2.2"/><path d="M10.8 1 L15.2 5.2 L10.8 9.4" fill="none" stroke="#b1b1b1" stroke-width="2.2"/></svg>
<svg style="left:131px;top:10px;" width="7" height="5" viewBox="0 0 7 5"><path d="M0.5 0.5 h5 l-2.5 3z" fill="#b9b9b9"/></svg>
<svg style="left:143px;top:8px;" width="8" height="9" viewBox="0 0 8 9"><rect x="1" y="1" width="6" height="1.4" fill="#222"/><path d="M1 4 h6 l-3 3.6z" fill="#222"/></svg>
<div style="left:176px;top:0px;width:76px;height:26px;background:#e4ecf6;border-top:1px solid #7aaee3;box-sizing:border-box"></div>
<div style="left:64px;top:3.5px;height:20px;line-height:20px;font-size:12.5px;color:#3f5f8a;white-space:nowrap;width:300px;text-align:center;">Video tools</div>
<div style="left:268px;top:2.5px;height:20px;line-height:20px;font-size:11.9px;color:#1e1e1e;white-space:nowrap;">1_ Picture_In_Picture_01 - iSpring Cam Pro</div>
<div style="left:1174px;top:10.9px;width:11px;height:1.7px;background:#333"></div>
<div style="left:1221px;top:6px;width:11.2px;height:10.6px;border:1.6px solid #333;box-sizing:border-box"></div>
<svg style="left:1268px;top:5px;" width="13" height="13" viewBox="0 0 13 13"><path d="M1 1 L12 12 M12 1 L1 12" stroke="#333" stroke-width="1.6"/></svg>
<div style="left:0px;top:26px;width:1295px;height:26px;background:linear-gradient(#f4f5f6,#fafbfb);border-bottom:1px solid #d3d5d8;box-sizing:border-box"></div>
<div style="left:0px;top:26px;width:59px;height:25px;background:#0d63b8"></div>
<svg style="left:17px;top:34px;" width="14" height="10" viewBox="0 0 14 10"><rect x="0" y="0" width="13" height="9.6" fill="#fff"/><rect x="2.2" y="1.3" width="1" height="7" fill="#0d63b8"/><rect x="4.6" y="2" width="6.6" height="1.3" fill="#0d63b8"/><rect x="4.6" y="4.2" width="6.6" height="1.3" fill="#0d63b8"/><rect x="4.6" y="6.4" width="6.6" height="1.3" fill="#0d63b8"/></svg>
<svg style="left:35px;top:37px;" width="9" height="6" viewBox="0 0 9 6"><path d="M0.3 0.5 h7.8 l-3.9 4.6z" fill="#fff"/></svg>
<div style="left:-59.5px;top:30.5px;height:20px;line-height:20px;font-size:11.7px;color:#2b2b2b;white-space:nowrap;width:300px;text-align:center;">Home</div>
<div style="left:-2px;top:30.5px;height:20px;line-height:20px;font-size:11.7px;color:#2b2b2b;white-space:nowrap;width:300px;text-align:center;">Help</div>
<div style="left:176px;top:27px;width:76px;height:25px;background:#fff;border:1px solid #d3d5d8;border-bottom:none;box-sizing:border-box"></div>
<div style="left:63.5px;top:30.5px;height:20px;line-height:20px;font-size:11.7px;color:#3b5c88;white-space:nowrap;width:300px;text-align:center;">Format</div>
<div style="left:0px;top:52px;width:1295px;height:93px;background:#fff"></div>
<div style="left:162px;top:57px;width:1px;height:83px;background:linear-gradient(#fff,#dcdcdc 30%,#dcdcdc 70%,#fff)"></div>
<div style="left:281px;top:57px;width:1px;height:83px;background:linear-gradient(#fff,#dcdcdc 30%,#dcdcdc 70%,#fff)"></div>
<div style="left:431px;top:57px;width:1px;height:83px;background:linear-gradient(#fff,#dcdcdc 30%,#dcdcdc 70%,#fff)"></div>
<div style="left:615px;top:57px;width:1px;height:83px;background:linear-gradient(#fff,#dcdcdc 30%,#dcdcdc 70%,#fff)"></div>
<div style="left:-67px;top:126px;height:20px;line-height:20px;font-size:12px;color:#6a6a6a;white-space:nowrap;width:300px;text-align:center;">Editing</div>
<div style="left:74px;top:126px;height:20px;line-height:20px;font-size:11.6px;color:#6a6a6a;white-space:nowrap;width:300px;text-align:center;">Video Styles</div>
<div style="left:208px;top:126px;height:20px;line-height:20px;font-size:11.6px;color:#6a6a6a;white-space:nowrap;width:300px;text-align:center;">Size</div>
<div style="left:375px;top:126px;height:20px;line-height:20px;font-size:11.9px;color:#6a6a6a;white-space:nowrap;width:300px;text-align:center;">Properties</div>
<svg style="left:12px;top:58px;" width="34" height="34" viewBox="0 0 34 34"><rect x="1.2" y="1.6" width="20" height="16" fill="#fff" stroke="#9aa3ab" stroke-width="1.2"/><rect x="3" y="3.4" width="16.4" height="12.4" fill="#cfe3f2"/><path d="M3 15.8 v-4.4 c1.6-2.6 4-3 5.6 -1.4 c1.8-2.4 4.6-2.4 6.2 .2 c1.6 -.8 3 -.2 4.600 1.400 v4.200z" fill="#6fa866"/><path d="M3.2 20.400 c-.4 4.600 2 6.600 7.400 6.200" fill="none" stroke="#2f64ad" stroke-width="2.400"/><path d="M9.400 23 l4.600 3.600 l-5 3.400z" fill="#2f64ad"/><rect x="12.800" y="14" width="20" height="18.400" fill="#fff" stroke="#9aa3ab" stroke-width="1.200"/><rect x="14.600" y="15.800" width="16.400" height="14.800" fill="#eaf0f6"/><circle cx="26.600" cy="19" r="1.800" fill="#eeb152"/><path d="M14.600 30.600 l5 -8 l3.600 5 l2.600 -3.200 l5.200 6.200z" fill="#5b9bd5"/></svg>
<div style="left:-121.5px;top:92.5px;height:20px;line-height:20px;font-size:11.7px;color:#2b2b2b;white-space:nowrap;width:300px;text-align:center;">Change</div>
<div style="left:-121.5px;top:106px;height:20px;line-height:20px;font-size:11.7px;color:#2b2b2b;white-space:nowrap;width:300px;text-align:center;">Video</div>
<svg style="left:56px;top:59px;" width="17" height="17" viewBox="0 0 17 17"><path d="M5 1 h10.5 v10.5 h-2.5" fill="none" stroke="#2f78c4" stroke-width="1.2"/><path d="M12 2.8 l2.3 2 l-2.3 2" fill="none" stroke="#2f78c4" stroke-width="1"/><path d="M1 4.6 h11 v11.4 h-9.3 l-1.7 -1.7z" fill="#2f78c4"/><rect x="3.3" y="5.2" width="6" height="3.8" fill="#fff"/><rect x="3.8" y="11.6" width="5.4" height="4.4" fill="#d9e7f6"/><rect x="4.6" y="12.3" width="1.6" height="3" fill="#2f78c4"/></svg>
<div style="left:76px;top:57px;height:20px;line-height:20px;font-size:12px;color:#2b2b2b;white-space:nowrap;">Export Video</div>
<svg style="left:56px;top:81px;" width="18" height="18" viewBox="0 0 18 18"><path d="M8.4 3.4 h-4.4 v5" fill="none" stroke="#2f64ad" stroke-width="1.5"/><path d="M4.6 0.6 L1.2 3.4 L4.6 6.2" fill="none" stroke="#2f64ad" stroke-width="1.5"/><rect x="5.7" y="7.2" width="10.6" height="9.6" fill="#fff" stroke="#808890" stroke-width="1.1"/><path d="M7 16 l3 -4 l2 2.2 l1.6 -1.6 l2 3.4z" fill="#6ea2d6"/><rect x="12.6" y="9" width="2" height="2" fill="#9fb5c9"/></svg>
<div style="left:76px;top:80px;height:20px;line-height:20px;font-size:11.6px;color:#2b2b2b;white-space:nowrap;">Reset Video</div>
<svg style="left:56px;top:105px;" width="18" height="16" viewBox="0 0 18 16"><path d="M1 9.4 l5.4 -3.8 l4.2 4.6 l-4.6 4.6 c-2 -2.4 -3.6 -3.6 -5 -5.4z" fill="#e9b866"/><path d="M6.2 5.4 l2.6 -2.2 l4.4 4.6 l-2.4 2.4z" fill="#595959"/><path d="M10.4 3 l3 -2.6 l2.6 2.4 l-2.8 3z" fill="#595959"/></svg>
<div style="left:76px;top:103px;height:20px;line-height:20px;font-size:11.95px;color:#2b2b2b;white-space:nowrap;">Format Painter</div>
<svg style="left:173px;top:58px;" width="18" height="18" viewBox="0 0 18 18"><path d="M1.2 1.2 h9 M1.2 1.2 v10.4 h7" fill="none" stroke="#6e6e6e" stroke-width="1.1"/><path d="M6 10.6 l1 -3 l7.4 -7 l2 2 l-7.4 7z" fill="#2f78c4"/><path d="M6 10.6 l1 -3 l2 2z" fill="#333"/><rect x="0" y="13.4" width="17" height="3.6" fill="#000"/></svg>
<div style="left:194px;top:57px;height:20px;line-height:20px;font-size:12.1px;color:#2b2b2b;white-space:nowrap;">Outline Style</div>
<svg style="left:267px;top:65px;" width="7" height="5" viewBox="0 0 7 5"><path d="M0.5 0.5 h5.6 l-2.8 3.2z" fill="#555"/></svg>
<svg style="left:173px;top:82px;" width="18" height="15" viewBox="0 0 18 15"><path d="M2.6 12 h9.8 c1.4 -1.6 2.6 -3.6 3.2 -6.4 c.8 3.6 -.6 7 -2.6 8.6 h-9z" fill="#a8a8a8"/><path d="M4.6 1.6 h11 c-.2 4 -1.6 7.6 -3.4 9.6 h-9 c-2.4 -.4 -2.2 -3.6 1.4 -9.6z" fill="#fff" stroke="#5e5e5e" stroke-width="2"/></svg>
<div style="left:194px;top:80px;height:20px;line-height:20px;font-size:11.8px;color:#2b2b2b;white-space:nowrap;">Video Effects</div>
<svg style="left:268px;top:88px;" width="7" height="5" viewBox="0 0 7 5"><path d="M0.5 0.5 h5.6 l-2.8 3.2z" fill="#555"/></svg>
<svg style="left:290px;top:58px;" width="19" height="18" viewBox="0 0 19 18"><rect x="0.6" y="0.6" width="17" height="5.8" fill="#fff" stroke="#8a8a8a" stroke-width="1.1"/><path d="M0.5 8.5 h18" stroke="#b5b5b5" stroke-width="1" stroke-dasharray="1 1"/><path d="M1 13 h5.6 M12 13 h5.6" stroke="#2f64ad" stroke-width="1.5"/><path d="M4 10 L1 13 L4 16 M15 10 L18 13 L15 16" fill="none" stroke="#2f64ad" stroke-width="1.5"/><rect x="7.8" y="11.4" width="3.2" height="3.2" fill="#fff" stroke="#7a7a7a" stroke-width="1"/></svg>
<div style="left:310.6px;top:57px;height:20px;line-height:20px;font-size:12.3px;color:#2b2b2b;white-space:nowrap;">Width:</div>
<svg style="left:290px;top:81px;" width="19" height="19" viewBox="0 0 19 19"><rect x="11.8" y="0.8" width="5.8" height="16.6" fill="#fff" stroke="#8a8a8a" stroke-width="1.1"/><path d="M9.5 0 v18" stroke="#b5b5b5" stroke-width="1" stroke-dasharray="1 1"/><path d="M4.6 1.2 v4.6 M4.6 12.4 v4.6" stroke="#2f64ad" stroke-width="1.5"/><path d="M1.6 4 L4.6 1 L7.6 4 M1.6 14.2 L4.6 17.2 L7.6 14.2" fill="none" stroke="#2f64ad" stroke-width="1.5"/><rect x="3" y="7.5" width="3.2" height="3.2" fill="#fff" stroke="#7a7a7a" stroke-width="1"/></svg>
<div style="left:310.6px;top:80px;height:20px;line-height:20px;font-size:12.3px;color:#2b2b2b;white-space:nowrap;">Height:</div>
<div style="left:354px;top:56px;width:73px;height:22.5px;background:#fff;border:1.2px solid #a6a6a6;box-sizing:border-box"></div><div style="left:357.5px;top:57.2px;height:20px;line-height:20px;font-size:11.5px;color:#1a1a1a;white-space:nowrap;">439 px</div><div style="left:410.5px;top:59px;width:14px;height:8px;background:#f4f4f4;border:1px solid #bdbdbd;box-sizing:border-box"></div><div style="left:410.5px;top:67.2px;width:14px;height:8.3px;background:#f3f3f3;border:1px solid #dcdcdc;box-sizing:border-box"></div><svg style="left:414px;top:60.8px;" width="7" height="5" viewBox="0 0 7 5"><path d="M0.2 4.2 h6.6 l-3.3 -3.8z" fill="#1c1c1c"/></svg><svg style="left:414px;top:69.4px;" width="7" height="5" viewBox="0 0 7 5"><path d="M0.4 0.6 h6.2 l-3.1 3.4z" fill="#777"/></svg>
<div style="left:354px;top:79px;width:73px;height:22.5px;background:#fff;border:1.2px solid #a6a6a6;box-sizing:border-box"></div><div style="left:357.5px;top:80.2px;height:20px;line-height:20px;font-size:11.5px;color:#1a1a1a;white-space:nowrap;">330 px</div><div style="left:410.5px;top:82px;width:14px;height:8px;background:#f4f4f4;border:1px solid #bdbdbd;box-sizing:border-box"></div><div style="left:410.5px;top:90.2px;width:14px;height:8.3px;background:#f3f3f3;border:1px solid #dcdcdc;box-sizing:border-box"></div><svg style="left:414px;top:83.8px;" width="7" height="5" viewBox="0 0 7 5"><path d="M0.2 4.2 h6.6 l-3.3 -3.8z" fill="#1c1c1c"/></svg><svg style="left:414px;top:92.4px;" width="7" height="5" viewBox="0 0 7 5"><path d="M0.4 0.6 h6.2 l-3.1 3.4z" fill="#777"/></svg>
<div style="left:293px;top:106px;width:14px;height:14px;background:#fff;border:1px solid #9a9a9a;box-sizing:border-box"></div>
<svg style="left:294px;top:107px;" width="12" height="12" viewBox="0 0 12 12"><path d="M2.4 6.2 L5 9 L9.8 2.6" fill="none" stroke="#6e6e6e" stroke-width="1.3"/></svg>
<div style="left:313.6px;top:103px;height:20px;line-height:20px;font-size:11.6px;color:#2b2b2b;white-space:nowrap;">Keep Aspect Ratio</div>
<svg style="left:441px;top:58px;" width="17" height="17" viewBox="0 0 17 17"><rect x="0.0" y="0.0" width="4.2" height="4.2" fill="#7f9bbd"/><rect x="0.0" y="4.2" width="4.2" height="4.2" fill="#e4ebf3"/><rect x="0.0" y="8.4" width="4.2" height="4.2" fill="#7f9bbd"/><rect x="0.0" y="12.6" width="4.2" height="4.2" fill="#e4ebf3"/><rect x="4.2" y="0.0" width="4.2" height="4.2" fill="#e4ebf3"/><rect x="4.2" y="4.2" width="4.2" height="4.2" fill="#7f9bbd"/><rect x="4.2" y="8.4" width="4.2" height="4.2" fill="#e4ebf3"/><rect x="4.2" y="12.6" width="4.2" height="4.2" fill="#7f9bbd"/><rect x="8.4" y="0.0" width="4.2" height="4.2" fill="#7f9bbd"/><rect x="8.4" y="4.2" width="4.2" height="4.2" fill="#e4ebf3"/><rect x="8.4" y="8.4" width="4.2" height="4.2" fill="#7f9bbd"/><rect x="8.4" y="12.6" width="4.2" height="4.2" fill="#e4ebf3"/><rect x="12.6" y="0.0" width="4.2" height="4.2" fill="#e4ebf3"/><rect x="12.6" y="4.2" width="4.2" height="4.2" fill="#7f9bbd"/><rect x="12.6" y="8.4" width="4.2" height="4.2" fill="#e4ebf3"/><rect x="12.6" y="12.6" width="4.2" height="4.2" fill="#7f9bbd"/></svg>
<div style="left:460px;top:57px;height:20px;line-height:20px;font-size:11.3px;color:#2b2b2b;white-space:nowrap;">Transparency:</div>
<svg style="left:441px;top:83px;" width="16" height="15" viewBox="0 0 16 15"><path d="M1 5 h3.4 l4.4 -4 v13 l-4.4 -4 h-3.4z" fill="#4a4a4a"/><path d="M10.6 4.4 a4.6 4.6 0 0 1 0 6.2" fill="none" stroke="#6a6a6a" stroke-width="1.1"/><path d="M12.4 2.4 a7.4 7.4 0 0 1 0 10.2" fill="none" stroke="#9a9a9a" stroke-width="1.1"/></svg>
<div style="left:460px;top:80px;height:20px;line-height:20px;font-size:11.8px;color:#2b2b2b;white-space:nowrap;">Volume</div>
<div style="left:537.5px;top:56px;width:73.5px;height:22.5px;background:#fff;border:1.2px solid #a6a6a6;box-sizing:border-box"></div><div style="left:541.0px;top:57.2px;height:20px;line-height:20px;font-size:11.5px;color:#1a1a1a;white-space:nowrap;">0%</div><div style="left:594.5px;top:59px;width:14px;height:8px;background:#f4f4f4;border:1px solid #bdbdbd;box-sizing:border-box"></div><div style="left:594.5px;top:67.2px;width:14px;height:8.3px;background:#f3f3f3;border:1px solid #dcdcdc;box-sizing:border-box"></div><svg style="left:598.0px;top:60.8px;" width="7" height="5" viewBox="0 0 7 5"><path d="M0.2 4.2 h6.6 l-3.3 -3.8z" fill="#1c1c1c"/></svg><svg style="left:598.0px;top:69.4px;" width="7" height="5" viewBox="0 0 7 5"><path d="M0.4 0.6 h6.2 l-3.1 3.4z" fill="#777"/></svg>
<div style="left:537.5px;top:79px;width:73.5px;height:22.5px;background:#fff;border:1.2px solid #a6a6a6;box-sizing:border-box"></div><div style="left:541.0px;top:80.2px;height:20px;line-height:20px;font-size:11.5px;color:#1a1a1a;white-space:nowrap;">100</div><div style="left:594.5px;top:82px;width:14px;height:8px;background:#f4f4f4;border:1px solid #bdbdbd;box-sizing:border-box"></div><div style="left:594.5px;top:90.2px;width:14px;height:8.3px;background:#f3f3f3;border:1px solid #dcdcdc;box-sizing:border-box"></div><svg style="left:598.0px;top:83.8px;" width="7" height="5" viewBox="0 0 7 5"><path d="M0.2 4.2 h6.6 l-3.3 -3.8z" fill="#1c1c1c"/></svg><svg style="left:598.0px;top:92.4px;" width="7" height="5" viewBox="0 0 7 5"><path d="M0.4 0.6 h6.2 l-3.1 3.4z" fill="#1c1c1c"/></svg></div>
<div style="left:0px;top:626.4px;width:1295px;height:76px;background:linear-gradient(#464c56,#40464f 30%,#3e444e)"></div>
<div style="left:19px;top:648px;width:111.5px;height:32px;background:#393e46;border-radius:4px"></div>
<div style="left:137px;top:648px;width:74px;height:32px;background:#393e46;border-radius:4px"></div>
<div style="left:53.8px;top:650px;width:1px;height:28px;background:#3e434b"></div>
<div style="left:94px;top:650px;width:1px;height:28px;background:#3e434b"></div>
<div style="left:173.7px;top:650px;width:1px;height:28px;background:#3e434b"></div>
<svg style="left:29px;top:656px;" width="16" height="17" viewBox="0 0 16 17"><path d="M3 1.2 L10.4 11.4 M13 1.2 L5.6 11.4" stroke="#dadada" stroke-width="2.8" stroke-linecap="round"/><circle cx="3.9" cy="13.4" r="2.2" fill="none" stroke="#dadada" stroke-width="1.8"/><circle cx="12.1" cy="13.4" r="2.2" fill="none" stroke="#dadada" stroke-width="1.8"/></svg>
<svg style="left:67px;top:656px;" width="16" height="17" viewBox="0 0 16 17"><path d="M0.8 0.4 h8.6 v1.9 h-6.6 v10.3 h-2z" fill="#dadada"/><path d="M4.4 2.6 h6.6 l4 4 v10 h-10.600z" fill="#dadada"/><path d="M10.600 2.600 v4.400 h4.400" fill="none" stroke="#393e46" stroke-width="1.100"/><rect x="6" y="9.200" width="7.400" height="1.100" fill="#393e46"/><rect x="6" y="11.500" width="7.400" height="1.100" fill="#393e46"/><rect x="6" y="13.800" width="7.400" height="1.100" fill="#393e46"/></svg>
<svg style="left:104px;top:654px;" width="17" height="20" viewBox="0 0 17 20"><circle cx="8.500" cy="2.600" r="1.900" fill="none" stroke="#6c7179" stroke-width="1.200"/><path d="M0.600 4.400 h4.400 v-1 h7 v1 h4.400 v6.600 h-5.600 v8.400 h-10.200z" fill="#6c7179"/><path d="M12 12 h2.600 l2.200 2.200 v5.200 h-4.800z" fill="#878c93"/></svg>
<svg style="left:146px;top:656px;" width="18" height="16" viewBox="0 0 18 16"><path d="M2 2.400 C6.400 4 11 8.400 15 14" fill="none" stroke="#dadada" stroke-width="2.800" stroke-linecap="round"/><path d="M16 2 C11 4 6 8.800 3.200 14.400" fill="none" stroke="#dadada" stroke-width="2.800" stroke-linecap="round"/></svg>
<svg style="left:184px;top:656px;" width="18" height="17" viewBox="0 0 18 17"><path d="M6 1.800 h-4 v13 h4 M12.200 1.800 h4 v13 h-4" fill="none" stroke="#dadada" stroke-width="2.300"/><rect x="8.400" y="0.400" width="1.400" height="16.200" fill="#b9bcc0"/></svg>
<div style="left:263.7px;top:648px;width:210px;height:33.2px;background:#393e46;border-radius:17px"></div>
<div style="left:304.6px;top:651px;width:1px;height:27px;background:#3e434b"></div>
<div style="left:432.7px;top:651px;width:1px;height:27px;background:#3e434b"></div>
<div style="left:343.5px;top:639.6px;width:50px;height:50px;background:#393e46;border:2px solid #454a53;border-radius:50%;box-sizing:border-box"></div>
<svg style="left:280px;top:657px;" width="13" height="15" viewBox="0 0 13 15"><rect x="0.6" y="1" width="2.3" height="12.6" fill="#d2d2d2"/><path d="M12.4 1 v12.6 l-9.2 -6.3z" fill="#d2d2d2"/></svg>
<svg style="left:315.5px;top:657px;" width="13" height="15" viewBox="0 0 13 15"><rect x="10" y="1" width="2.3" height="12.6" fill="#d2d2d2"/><path d="M0.6 1 v12.6 l9.2 -6.3z" fill="#d2d2d2"/></svg>
<svg style="left:361px;top:652.6px;" width="19" height="24" viewBox="0 0 19 24"><path d="M1.2 1 L18 11.8 L1.2 22.8z" fill="#d2d2d2" stroke="#d2d2d2" stroke-width="1" stroke-linejoin="round"/></svg>
<svg style="left:409px;top:656px;" width="13" height="17" viewBox="0 0 13 17"><path d="M10.4 2.2 L2.8 8.4 L10.4 14.6" fill="none" stroke="#d2d2d2" stroke-width="2.2" stroke-linecap="round" stroke-linejoin="round"/></svg>
<svg style="left:444.6px;top:656px;" width="13" height="17" viewBox="0 0 13 17"><path d="M2.6 2.2 L10.2 8.4 L2.6 14.6" fill="none" stroke="#d2d2d2" stroke-width="2.2" stroke-linecap="round" stroke-linejoin="round"/></svg>
<div style="left:494px;top:661.8px;width:392px;height:5.8px;background:#2a2e34;border-radius:2.9px"></div>
<div style="left:494px;top:661.8px;width:119px;height:5.8px;background:#7099b8;border-radius:2.9px"></div>
<div style="left:607.5px;top:659.6px;width:10.2px;height:10.2px;background:#e6e6e6;border-radius:50%"></div>
<div style="left:895px;top:654.4px;height:20px;line-height:20px;font-size:12.2px;color:#dadada;white-space:nowrap;letter-spacing:0px;-webkit-text-stroke:.2px #dadada;">0:04.9 / 0:16.4</div>
<div style="left:0px;top:702.4px;width:1295px;height:28px;background:#2a2d33"></div>
<div style="left:0px;top:702.4px;width:26.5px;height:28px;background:#30343a"></div>
<div style="left:6px;top:716.1px;width:10.6px;height:1.5px;background:#adadad"></div><div style="left:10.5px;top:711.6px;width:1.5px;height:10.6px;background:#adadad"></div>
<svg style="left:0px;top:702.4px;" width="1295" height="28" viewBox="0 0 1295 28"><rect x="26.60" y="20.5" width="1" height="7.5" fill="#3d4147"/><rect x="34.09" y="24" width="1" height="4" fill="#33373d"/><rect x="41.58" y="24" width="1" height="4" fill="#33373d"/><rect x="49.07" y="24" width="1" height="4" fill="#33373d"/><rect x="56.56" y="24" width="1" height="4" fill="#33373d"/><rect x="64.05" y="22.6" width="1" height="5.4" fill="#383c42"/><rect x="71.54" y="24" width="1" height="4" fill="#33373d"/><rect x="79.03" y="24" width="1" height="4" fill="#33373d"/><rect x="86.52" y="24" width="1" height="4" fill="#33373d"/><rect x="94.01" y="24" width="1" height="4" fill="#33373d"/><rect x="101.50" y="20.5" width="1" height="7.5" fill="#3d4147"/><rect x="108.99" y="24" width="1" height="4" fill="#33373d"/><rect x="116.48" y="24" width="1" height="4" fill="#33373d"/><rect x="123.97" y="24" width="1" height="4" fill="#33373d"/><rect x="131.46" y="24" width="1" height="4" fill="#33373d"/><rect x="138.95" y="22.6" width="1" height="5.4" fill="#383c42"/><rect x="146.44" y="24" width="1" height="4" fill="#33373d"/><rect x="153.93" y="24" width="1" height="4" fill="#33373d"/><rect x="161.42" y="24" width="1" height="4" fill="#33373d"/><rect x="168.91" y="24" width="1" height="4" fill="#33373d"/><rect x="176.40" y="20.5" width="1" height="7.5" fill="#3d4147"/><rect x="183.89" y="24" width="1" height="4" fill="#33373d"/><rect x="191.38" y="24" width="1" height="4" fill="#33373d"/><rect x="198.87" y="24" width="1" height="4" fill="#33373d"/><rect x="206.36" y="24" width="1" height="4" fill="#33373d"/><rect x="213.85" y="22.6" width="1" height="5.4" fill="#383c42"/><rect x="221.34" y="24" width="1" height="4" fill="#33373d"/><rect x="228.83" y="24" width="1" height="4" fill="#33373d"/><rect x="236.32" y="24" width="1" height="4" fill="#33373d"/><rect x="243.81" y="24" width="1" height="4" fill="#33373d"/><rect x="251.30" y="20.5" width="1" height="7.5" fill="#3d4147"/><rect x="258.79" y="24" width="1" height="4" fill="#33373d"/><rect x="266.28" y="24" width="1" height="4" fill="#33373d"/><rect x="273.77" y="24" width="1" height="4" fill="#33373d"/><rect x="281.26" y="24" width="1" height="4" fill="#33373d"/><rect x="288.75" y="22.6" width="1" height="5.4" fill="#383c42"/><rect x="296.24" y="24" width="1" height="4" fill="#33373d"/><rect x="303.73" y="24" width="1" height="4" fill="#33373d"/><rect x="311.22" y="24" width="1" height="4" fill="#33373d"/><rect x="318.71" y="24" width="1" height="4" fill="#33373d"/><rect x="326.20" y="20.5" width="1" height="7.5" fill="#3d4147"/><rect x="333.69" y="24" width="1" height="4" fill="#33373d"/><rect x="341.18" y="24" width="1" height="4" fill="#33373d"/><rect x="348.67" y="24" width="1" height="4" fill="#33373d"/><rect x="356.16" y="24" width="1" height="4" fill="#33373d"/><rect x="363.65" y="22.6" width="1" height="5.4" fill="#383c42"/><rect x="371.14" y="24" width="1" height="4" fill="#33373d"/><rect x="378.63" y="24" width="1" height="4" fill="#33373d"/><rect x="386.12" y="24" width="1" height="4" fill="#33373d"/><rect x="393.61" y="24" width="1" height="4" fill="#33373d"/><rect x="401.10" y="20.5" width="1" height="7.5" fill="#3d4147"/><rect x="408.59" y="24" width="1" height="4" fill="#33373d"/><rect x="416.08" y="24" width="1" height="4" fill="#33373d"/><rect x="423.57" y="24" width="1" height="4" fill="#33373d"/><rect x="431.06" y="24" width="1" height="4" fill="#33373d"/><rect x="438.55" y="22.6" width="1" height="5.4" fill="#383c42"/><rect x="446.04" y="24" width="1" height="4" fill="#33373d"/><rect x="453.53" y="24" width="1" height="4" fill="#33373d"/><rect x="461.02" y="24" width="1" height="4" fill="#33373d"/><rect x="468.51" y="24" width="1" height="4" fill="#33373d"/><rect x="476.00" y="20.5" width="1" height="7.5" fill="#3d4147"/><rect x="483.49" y="24" width="1" height="4" fill="#33373d"/><rect x="490.98" y="24" width="1" height="4" fill="#33373d"/><rect x="498.47" y="24" width="1" height="4" fill="#33373d"/><rect x="505.96" y="24" width="1" height="4" fill="#33373d"/><rect x="513.45" y="22.6" width="1" height="5.4" fill="#383c42"/><rect x="520.94" y="24" width="1" height="4" fill="#33373d"/><rect x="528.43" y="24" width="1" height="4" fill="#33373d"/><rect x="535.92" y="24" width="1" height="4" fill="#33373d"/><rect x="543.41" y="24" width="1" height="4" fill="#33373d"/><rect x="550.90" y="20.5" width="1" height="7.5" fill="#3d4147"/><rect x="558.39" y="24" width="1" height="4" fill="#33373d"/><rect x="565.88" y="24" width="1" height="4" fill="#33373d"/><rect x="573.37" y="24" width="1" height="4" fill="#33373d"/><rect x="580.86" y="24" width="1" height="4" fill="#33373d"/><rect x="588.35" y="22.6" width="1" height="5.4" fill="#383c42"/><rect x="595.84" y="24" width="1" height="4" fill="#33373d"/><rect x="603.33" y="24" width="1" height="4" fill="#33373d"/><rect x="610.82" y="24" width="1" height="4" fill="#33373d"/><rect x="618.31" y="24" width="1" height="4" fill="#33373d"/><rect x="625.80" y="20.5" width="1" height="7.5" fill="#3d4147"/><rect x="633.29" y="24" width="1" height="4" fill="#33373d"/><rect x="640.78" y="24" width="1" height="4" fill="#33373d"/><rect x="648.27" y="24" width="1" height="4" fill="#33373d"/><rect x="655.76" y="24" width="1" height="4" fill="#33373d"/><rect x="663.25" y="22.6" width="1" height="5.4" fill="#383c42"/><rect x="670.74" y="24" width="1" height="4" fill="#33373d"/><rect x="678.23" y="24" width="1" height="4" fill="#33373d"/><rect x="685.72" y="24" width="1" height="4" fill="#33373d"/><rect x="693.21" y="24" width="1" height="4" fill="#33373d"/><rect x="700.70" y="20.5" width="1" height="7.5" fill="#3d4147"/><rect x="708.19" y="24" width="1" height="4" fill="#33373d"/><rect x="715.68" y="24" width="1" height="4" fill="#33373d"/><rect x="723.17" y="24" width="1" height="4" fill="#33373d"/><rect x="730.66" y="24" width="1" height="4" fill="#33373d"/><rect x="738.15" y="22.6" width="1" height="5.4" fill="#383c42"/><rect x="745.64" y="24" width="1" height="4" fill="#33373d"/><rect x="753.13" y="24" width="1" height="4" fill="#33373d"/><rect x="760.62" y="24" width="1" height="4" fill="#33373d"/><rect x="768.11" y="24" width="1" height="4" fill="#33373d"/><rect x="775.60" y="20.5" width="1" height="7.5" fill="#3d4147"/><rect x="783.09" y="24" width="1" height="4" fill="#33373d"/><rect x="790.58" y="24" width="1" height="4" fill="#33373d"/><rect x="798.07" y="24" width="1" height="4" fill="#33373d"/><rect x="805.56" y="24" width="1" height="4" fill="#33373d"/><rect x="813.05" y="22.6" width="1" height="5.4" fill="#383c42"/><rect x="820.54" y="24" width="1" height="4" fill="#33373d"/><rect x="828.03" y="24" width="1" height="4" fill="#33373d"/><rect x="835.52" y="24" width="1" height="4" fill="#33373d"/><rect x="843.01" y="24" width="1" height="4" fill="#33373d"/><rect x="850.50" y="20.5" width="1" height="7.5" fill="#3d4147"/><rect x="857.99" y="24" width="1" height="4" fill="#33373d"/><rect x="865.48" y="24" width="1" height="4" fill="#33373d"/><rect x="872.97" y="24" width="1" height="4" fill="#33373d"/><rect x="880.46" y="24" width="1" height="4" fill="#33373d"/><rect x="887.95" y="22.6" width="1" height="5.4" fill="#383c42"/><rect x="895.44" y="24" width="1" height="4" fill="#33373d"/><rect x="902.93" y="24" width="1" height="4" fill="#33373d"/><rect x="910.42" y="24" width="1" height="4" fill="#33373d"/><rect x="917.91" y="24" width="1" height="4" fill="#33373d"/><rect x="925.40" y="20.5" width="1" height="7.5" fill="#3d4147"/><rect x="932.89" y="24" width="1" height="4" fill="#33373d"/><rect x="940.38" y="24" width="1" height="4" fill="#33373d"/><rect x="947.87" y="24" width="1" height="4" fill="#33373d"/><rect x="955.36" y="24" width="1" height="4" fill="#33373d"/><rect x="962.85" y="22.6" width="1" height="5.4" fill="#383c42"/><rect x="970.34" y="24" width="1" height="4" fill="#33373d"/><rect x="977.83" y="24" width="1" height="4" fill="#33373d"/><rect x="985.32" y="24" width="1" height="4" fill="#33373d"/><rect x="992.81" y="24" width="1" height="4" fill="#33373d"/><rect x="1000.30" y="20.5" width="1" height="7.5" fill="#3d4147"/><rect x="1007.79" y="24" width="1" height="4" fill="#33373d"/><rect x="1015.28" y="24" width="1" height="4" fill="#33373d"/><rect x="1022.77" y="24" width="1" height="4" fill="#33373d"/><rect x="1030.26" y="24" width="1" height="4" fill="#33373d"/><rect x="1037.75" y="22.6" width="1" height="5.4" fill="#383c42"/><rect x="1045.24" y="24" width="1" height="4" fill="#33373d"/><rect x="1052.73" y="24" width="1" height="4" fill="#33373d"/><rect x="1060.22" y="24" width="1" height="4" fill="#33373d"/><rect x="1067.71" y="24" width="1" height="4" fill="#33373d"/><rect x="1075.20" y="20.5" width="1" height="7.5" fill="#3d4147"/><rect x="1082.69" y="24" width="1" height="4" fill="#33373d"/><rect x="1090.18" y="24" width="1" height="4" fill="#33373d"/><rect x="1097.67" y="24" width="1" height="4" fill="#33373d"/><rect x="1105.16" y="24" width="1" height="4" fill="#33373d"/><rect x="1112.65" y="22.6" width="1" height="5.4" fill="#383c42"/><rect x="1120.14" y="24" width="1" height="4" fill="#33373d"/><rect x="1127.63" y="24" width="1" height="4" fill="#33373d"/><rect x="1135.12" y="24" width="1" height="4" fill="#33373d"/><rect x="1142.61" y="24" width="1" height="4" fill="#33373d"/><rect x="1150.10" y="20.5" width="1" height="7.5" fill="#3d4147"/><rect x="1157.59" y="24" width="1" height="4" fill="#33373d"/><rect x="1165.08" y="24" width="1" height="4" fill="#33373d"/><rect x="1172.57" y="24" width="1" height="4" fill="#33373d"/><rect x="1180.06" y="24" width="1" height="4" fill="#33373d"/><rect x="1187.55" y="22.6" width="1" height="5.4" fill="#383c42"/><rect x="1195.04" y="24" width="1" height="4" fill="#33373d"/><rect x="1202.53" y="24" width="1" height="4" fill="#33373d"/><rect x="1210.02" y="24" width="1" height="4" fill="#33373d"/><rect x="1217.51" y="24" width="1" height="4" fill="#33373d"/><rect x="1225.00" y="20.5" width="1" height="7.5" fill="#3d4147"/><rect x="1232.49" y="24" width="1" height="4" fill="#33373d"/><rect x="1239.98" y="24" width="1" height="4" fill="#33373d"/><rect x="1247.47" y="24" width="1" height="4" fill="#33373d"/><rect x="1254.96" y="24" width="1" height="4" fill="#33373d"/><rect x="1262.45" y="22.6" width="1" height="5.4" fill="#383c42"/><rect x="1269.94" y="24" width="1" height="4" fill="#33373d"/><rect x="1277.43" y="24" width="1" height="4" fill="#33373d"/><rect x="1284.92" y="24" width="1" height="4" fill="#33373d"/><rect x="1292.41" y="24" width="1" height="4" fill="#33373d"/></svg>
<div style="left:-48.0px;top:704.2px;height:20px;line-height:20px;font-size:9.9px;color:#cbcbcb;white-space:nowrap;width:300px;text-align:center;letter-spacing:-0.15px;-webkit-text-stroke:.2px #cbcbcb;">0:00.5</div>
<div style="left:26.900000000000006px;top:704.2px;height:20px;line-height:20px;font-size:9.9px;color:#cbcbcb;white-space:nowrap;width:300px;text-align:center;letter-spacing:-0.15px;-webkit-text-stroke:.2px #cbcbcb;">0:01.0</div>
<div style="left:101.80000000000001px;top:704.2px;height:20px;line-height:20px;font-size:9.9px;color:#cbcbcb;white-space:nowrap;width:300px;text-align:center;letter-spacing:-0.15px;-webkit-text-stroke:.2px #cbcbcb;">0:01.5</div>
<div style="left:176.70000000000005px;top:704.2px;height:20px;line-height:20px;font-size:9.9px;color:#cbcbcb;white-space:nowrap;width:300px;text-align:center;letter-spacing:-0.15px;-webkit-text-stroke:.2px #cbcbcb;">0:02.0</div>
<div style="left:251.60000000000002px;top:704.2px;height:20px;line-height:20px;font-size:9.9px;color:#cbcbcb;white-space:nowrap;width:300px;text-align:center;letter-spacing:-0.15px;-webkit-text-stroke:.2px #cbcbcb;">0:02.5</div>
<div style="left:326.50000000000006px;top:704.2px;height:20px;line-height:20px;font-size:9.9px;color:#cbcbcb;white-space:nowrap;width:300px;text-align:center;letter-spacing:-0.15px;-webkit-text-stroke:.2px #cbcbcb;">0:03.0</div>
<div style="left:401.4000000000001px;top:704.2px;height:20px;line-height:20px;font-size:9.9px;color:#cbcbcb;white-space:nowrap;width:300px;text-align:center;letter-spacing:-0.15px;-webkit-text-stroke:.2px #cbcbcb;">0:03.5</div>
<div style="left:476.30000000000007px;top:704.2px;height:20px;line-height:20px;font-size:9.9px;color:#cbcbcb;white-space:nowrap;width:300px;text-align:center;letter-spacing:-0.15px;-webkit-text-stroke:.2px #cbcbcb;">0:04.0</div>
<div style="left:551.2px;top:704.2px;height:20px;line-height:20px;font-size:9.9px;color:#cbcbcb;white-space:nowrap;width:300px;text-align:center;letter-spacing:-0.15px;-webkit-text-stroke:.2px #cbcbcb;">0:04.5</div>
<div style="left:626.1px;top:704.2px;height:20px;line-height:20px;font-size:9.9px;color:#cbcbcb;white-space:nowrap;width:300px;text-align:center;letter-spacing:-0.15px;-webkit-text-stroke:.2px #cbcbcb;">0:05.0</div>
<div style="left:701.0000000000001px;top:704.2px;height:20px;line-height:20px;font-size:9.9px;color:#cbcbcb;white-space:nowrap;width:300px;text-align:center;letter-spacing:-0.15px;-webkit-text-stroke:.2px #cbcbcb;">0:05.5</div>
<div style="left:775.9000000000001px;top:704.2px;height:20px;line-height:20px;font-size:9.9px;color:#cbcbcb;white-space:nowrap;width:300px;text-align:center;letter-spacing:-0.15px;-webkit-text-stroke:.2px #cbcbcb;">0:06.0</div>
<div style="left:850.8000000000001px;top:704.2px;height:20px;line-height:20px;font-size:9.9px;color:#cbcbcb;white-space:nowrap;width:300px;text-align:center;letter-spacing:-0.15px;-webkit-text-stroke:.2px #cbcbcb;">0:06.5</div>
<div style="left:925.7px;top:704.2px;height:20px;line-height:20px;font-size:9.9px;color:#cbcbcb;white-space:nowrap;width:300px;text-align:center;letter-spacing:-0.15px;-webkit-text-stroke:.2px #cbcbcb;">0:07.0</div>
<div style="left:1000.5999999999999px;top:704.2px;height:20px;line-height:20px;font-size:9.9px;color:#cbcbcb;white-space:nowrap;width:300px;text-align:center;letter-spacing:-0.15px;-webkit-text-stroke:.2px #cbcbcb;">0:07.5</div>
<div style="left:1075.5px;top:704.2px;height:20px;line-height:20px;font-size:9.9px;color:#cbcbcb;white-space:nowrap;width:300px;text-align:center;letter-spacing:-0.15px;-webkit-text-stroke:.2px #cbcbcb;">0:08.0</div>
<div style="left:0px;top:730.4px;width:1295px;height:223px;background:#2b2f35"></div>
<div style="left:0px;top:730.4px;width:26.5px;height:240.6px;background:#2d3137"></div>
<div style="left:0px;top:953px;width:1295px;height:18px;background:#25282d"></div>
<div style="left:0px;top:969px;width:1295px;height:2px;background:#34373c"></div>
<div style="left:157px;top:962.2px;width:43px;height:6.4px;background:#adafb1;border-radius:3.2px"></div>
<svg style="left:4.4px;top:750.6px;" width="14" height="10" viewBox="0 0 14 10"><path d="M0.4 4.6 C3 0.2 10.6 0.2 13.2 4.6 C10.6 9 3 9 0.4 4.6z" fill="#4c5159"/><circle cx="6.8" cy="4.6" r="2.7" fill="#2d3137"/><circle cx="6.8" cy="4.600" r="1.400" fill="#4c5159"/></svg>
<div style="left:3px;top:768.5px;width:18px;height:1px;background:#32363c"></div>
<svg style="left:5px;top:775px;" width="13" height="15" viewBox="0 0 13 15"><path d="M3.4 7 v-3 a3 3 0 0 1 6 0 v.6" fill="none" stroke="#4c5159" stroke-width="1.7"/><rect x="0.6" y="7" width="10.6" height="7" rx="0.8" fill="#4c5159"/></svg>
<div style="left:0px;top:805.5px;width:26.5px;height:1px;background:#25282d"></div>
<svg style="left:4.4px;top:825.1px;" width="14" height="10" viewBox="0 0 14 10"><path d="M0.4 4.6 C3 0.2 10.6 0.2 13.2 4.6 C10.6 9 3 9 0.4 4.6z" fill="#4c5159"/><circle cx="6.8" cy="4.6" r="2.7" fill="#2d3137"/><circle cx="6.8" cy="4.600" r="1.400" fill="#4c5159"/></svg>
<div style="left:3px;top:843.0px;width:18px;height:1px;background:#32363c"></div>
<svg style="left:5px;top:849.5px;" width="13" height="15" viewBox="0 0 13 15"><path d="M3.4 7 v-3 a3 3 0 0 1 6 0 v.6" fill="none" stroke="#4c5159" stroke-width="1.7"/><rect x="0.6" y="7" width="10.6" height="7" rx="0.8" fill="#4c5159"/></svg>
<div style="left:0px;top:880.0px;width:26.5px;height:1px;background:#25282d"></div>
<svg style="left:4.4px;top:899.6px;" width="14" height="10" viewBox="0 0 14 10"><path d="M0.4 4.6 C3 0.2 10.6 0.2 13.2 4.6 C10.6 9 3 9 0.4 4.6z" fill="#4c5159"/><circle cx="6.8" cy="4.6" r="2.7" fill="#2d3137"/><circle cx="6.8" cy="4.600" r="1.400" fill="#4c5159"/></svg>
<div style="left:3px;top:917.5px;width:18px;height:1px;background:#32363c"></div>
<svg style="left:5px;top:924px;" width="13" height="15" viewBox="0 0 13 15"><path d="M3.4 7 v-3 a3 3 0 0 1 6 0 v.6" fill="none" stroke="#4c5159" stroke-width="1.7"/><rect x="0.6" y="7" width="10.6" height="7" rx="0.8" fill="#4c5159"/></svg>
<div style="left:0px;top:954.5px;width:26.5px;height:1px;background:#25282d"></div>
<div style="left:27px;top:733px;width:486px;height:70.7px;background:#444b54;border-radius:5px;box-sizing:border-box;overflow:hidden;"></div>
<svg style="left:35px;top:739px;filter:blur(.4px)" width="81.5" height="61"><use href="#woman" width="81.5" height="61"/></svg>
<svg style="left:128.5px;top:760px;" width="16" height="16" viewBox="0 0 16 16"><rect x="0.8" y="0.8" width="14.4" height="14.4" fill="none" stroke="#dedede" stroke-width="1.3"/><path d="M4 1 v14 M12 1 v14 M4 8 h8" stroke="#dedede" stroke-width="1.1"/><path d="M1 4.4 h3 M12 4.4 h3" stroke="#dedede" stroke-width="1"/><path d="M1 8 h3 M12 8 h3" stroke="#dedede" stroke-width="1"/><path d="M1 11.6 h3 M12 11.6 h3" stroke="#dedede" stroke-width="1"/></svg>
<div style="left:153.6px;top:760.4px;height:20px;line-height:20px;font-size:13.4px;color:#ececec;white-space:nowrap;letter-spacing:-0.05px;-webkit-text-stroke:.75px #ececec;">Moniq_26_02</div>
<div style="left:558px;top:733px;width:760px;height:70.9px;background:#444b54;border-radius:6px;box-sizing:border-box;overflow:hidden;border:2px solid #c9a873;"></div>
<svg style="left:566.7px;top:739px;filter:blur(.4px)" width="81.5" height="61"><use href="#woman" width="81.5" height="61"/></svg>
<svg style="left:660px;top:760px;" width="16" height="16" viewBox="0 0 16 16"><rect x="0.8" y="0.8" width="14.4" height="14.4" fill="none" stroke="#d9d9c8" stroke-width="1.3"/><path d="M4 1 v14 M12 1 v14 M4 8 h8" stroke="#d9d9c8" stroke-width="1.1"/><path d="M1 4.4 h3 M12 4.4 h3" stroke="#d9d9c8" stroke-width="1"/><path d="M1 8 h3 M12 8 h3" stroke="#d9d9c8" stroke-width="1"/><path d="M1 11.6 h3 M12 11.6 h3" stroke="#d9d9c8" stroke-width="1"/></svg>
<div style="left:685.5px;top:760.4px;height:20px;line-height:20px;font-size:13.4px;color:#ececec;white-space:nowrap;letter-spacing:-0.05px;-webkit-text-stroke:.75px #ececec;">Moniq_26_02</div>
<div style="left:666.3px;top:747.2px;width:35px;height:35px;background:#d9ad3d;border-radius:50%;opacity:.85"></div>
<svg style="left:680px;top:762px;" width="17" height="16" viewBox="0 0 17 16"><path d="M3.6 7.8 V3.6 a1.3 1.3 0 0 1 2.6 0 V2.6 a1.3 1.3 0 0 1 2.6 0 V3.2 a1.3 1.3 0 0 1 2.6 0 V4.4 a1.3 1.3 0 0 1 2.6 0 V10 c0 3 -1.8 5 -5.2 5 c-3 0 -4.200 -1 -5.800 -3.400 L1 8.800 c-.600 -1.200 1.200 -2.200 2 -.800z" fill="#fff" stroke="#111" stroke-width="1.100" stroke-linejoin="round"/><path d="M6.200 3.600 v3.600 M8.800 3 v4 M11.400 3.800 v3.400" stroke="#111" stroke-width=".900"/></svg>
<div style="left:27px;top:807.5px;width:305.3px;height:70.7px;background:#444b54;border-radius:5px;overflow:hidden;"><svg style="left:8.0px;top:5.5px;filter:blur(.6px)" width="81.5" height="61"><use href="#shDash" width="81.5" height="61"/></svg><svg style="left:101.5px;top:26.8px;" width="16" height="16" viewBox="0 0 16 16"><rect x="0.8" y="0.8" width="14.4" height="14.4" fill="none" stroke="#dedede" stroke-width="1.3"/><path d="M4 1 v14 M12 1 v14 M4 8 h8" stroke="#dedede" stroke-width="1.1"/><path d="M1 4.4 h3 M12 4.4 h3" stroke="#dedede" stroke-width="1"/><path d="M1 8 h3 M12 8 h3" stroke="#dedede" stroke-width="1"/><path d="M1 11.6 h3 M12 11.6 h3" stroke="#dedede" stroke-width="1"/></svg><div style="left:126.1px;top:27px;height:20px;line-height:20px;font-size:13.4px;color:#ececec;white-space:nowrap;letter-spacing:-0.05px;-webkit-text-stroke:.75px #ececec;">Recording (06.02.2018 12-58-</div></div>
<div style="left:333.4px;top:807.5px;width:60.200000000000045px;height:70.7px;background:#444b54;border-radius:5px;overflow:hidden;"><svg style="left:8.0px;top:5.5px;filter:blur(.6px)" width="81.5" height="61"><use href="#shList" width="81.5" height="61"/></svg></div>
<div style="left:394.7px;top:807.5px;width:289.59999999999997px;height:70.7px;background:#444b54;border-radius:5px;overflow:hidden;"><svg style="left:7.9px;top:5.5px;filter:blur(.6px)" width="81.5" height="61"><use href="#shCal" width="81.5" height="61"/></svg><svg style="left:101.0px;top:26.8px;" width="16" height="16" viewBox="0 0 16 16"><rect x="0.8" y="0.8" width="14.4" height="14.4" fill="none" stroke="#dedede" stroke-width="1.3"/><path d="M4 1 v14 M12 1 v14 M4 8 h8" stroke="#dedede" stroke-width="1.1"/><path d="M1 4.4 h3 M12 4.4 h3" stroke="#dedede" stroke-width="1"/><path d="M1 8 h3 M12 8 h3" stroke="#dedede" stroke-width="1"/><path d="M1 11.6 h3 M12 11.6 h3" stroke="#dedede" stroke-width="1"/></svg><div style="left:125.6px;top:27px;height:20px;line-height:20px;font-size:13.4px;color:#ececec;white-space:nowrap;letter-spacing:-0.05px;-webkit-text-stroke:.75px #ececec;">Recording (06.02.2018 12-5</div></div>
<div style="left:685.6px;top:807.5px;width:82.60000000000002px;height:70.7px;background:#444b54;border-radius:5px;overflow:hidden;"><svg style="left:8.1px;top:5.5px;filter:blur(.6px)" width="81.5" height="61"><use href="#shForm" width="81.5" height="61"/></svg></div>
<div style="left:769.3px;top:807.5px;width:213.30000000000007px;height:70.7px;background:#444b54;border-radius:5px;overflow:hidden;"><svg style="left:7.7px;top:5.5px;filter:blur(.6px)" width="81.5" height="61"><use href="#shForm" width="81.5" height="61"/></svg><svg style="left:100.40000000000009px;top:26.8px;" width="16" height="16" viewBox="0 0 16 16"><rect x="0.8" y="0.8" width="14.4" height="14.4" fill="none" stroke="#dedede" stroke-width="1.3"/><path d="M4 1 v14 M12 1 v14 M4 8 h8" stroke="#dedede" stroke-width="1.1"/><path d="M1 4.4 h3 M12 4.4 h3" stroke="#dedede" stroke-width="1"/><path d="M1 8 h3 M12 8 h3" stroke="#dedede" stroke-width="1"/><path d="M1 11.6 h3 M12 11.6 h3" stroke="#dedede" stroke-width="1"/></svg><div style="left:125.00000000000009px;top:27px;height:20px;line-height:20px;font-size:13.4px;color:#ececec;white-space:nowrap;letter-spacing:-0.05px;-webkit-text-stroke:.75px #ececec;">Recording (06.</div></div>
<div style="left:983.8px;top:807.5px;width:127.40000000000009px;height:70.7px;background:#444b54;border-radius:5px;overflow:hidden;"><svg style="left:9.5px;top:5.5px;filter:blur(.6px)" width="81.5" height="61"><use href="#shForm" width="81.5" height="61"/></svg><svg style="left:103.0px;top:26.8px;" width="16" height="16" viewBox="0 0 16 16"><rect x="0.8" y="0.8" width="14.4" height="14.4" fill="none" stroke="#dedede" stroke-width="1.3"/><path d="M4 1 v14 M12 1 v14 M4 8 h8" stroke="#dedede" stroke-width="1.1"/><path d="M1 4.4 h3 M12 4.4 h3" stroke="#dedede" stroke-width="1"/><path d="M1 8 h3 M12 8 h3" stroke="#dedede" stroke-width="1"/><path d="M1 11.6 h3 M12 11.6 h3" stroke="#dedede" stroke-width="1"/></svg></div>
<div style="left:1112.3px;top:807.5px;width:37.600000000000136px;height:70.7px;background:#444b54;border-radius:5px;overflow:hidden;"><svg style="left:8.0px;top:5.5px;filter:blur(.6px)" width="81.5" height="61"><use href="#shForm" width="81.5" height="61"/></svg></div>
<div style="left:1151px;top:807.5px;width:169px;height:70.7px;background:#444b54;border-radius:5px;overflow:hidden;"><svg style="left:7.7px;top:5.5px;filter:blur(.6px)" width="81.5" height="61"><use href="#shForm" width="81.5" height="61"/></svg><svg style="left:100.79999999999995px;top:26.8px;" width="16" height="16" viewBox="0 0 16 16"><rect x="0.8" y="0.8" width="14.4" height="14.4" fill="none" stroke="#dedede" stroke-width="1.3"/><path d="M4 1 v14 M12 1 v14 M4 8 h8" stroke="#dedede" stroke-width="1.1"/><path d="M1 4.4 h3 M12 4.4 h3" stroke="#dedede" stroke-width="1"/><path d="M1 8 h3 M12 8 h3" stroke="#dedede" stroke-width="1"/><path d="M1 11.6 h3 M12 11.6 h3" stroke="#dedede" stroke-width="1"/></svg><div style="left:125.39999999999995px;top:27px;height:20px;line-height:20px;font-size:13.4px;color:#ececec;white-space:nowrap;letter-spacing:-0.05px;-webkit-text-stroke:.75px #ececec;">Rec</div></div>
<div style="left:27px;top:882px;width:1270px;height:70.7px;background:#444b54;border-radius:5px;overflow:hidden;"><svg style="left:0;top:0" width="1270" height="70.7"><path d="M0 70.7 L0.0 52.7 L1.0 52.4 L2.0 53.3 L3.0 52.3 L4.0 53.2 L5.0 52.9 L6.0 52.4 L7.0 53.3 L8.0 52.4 L9.0 53.2 L10.0 52.6 L11.0 52.6 L12.0 53.3 L13.0 54.0 L14.0 52.8 L15.0 53.0 L16.0 53.7 L17.0 54.3 L18.0 53.7 L19.0 53.4 L20.0 54.5 L21.0 52.8 L22.0 54.3 L23.0 53.3 L24.0 53.1 L25.0 53.0 L26.0 53.4 L27.0 54.3 L28.0 53.2 L29.0 53.9 L30.0 54.0 L31.0 53.6 L32.0 53.9 L33.0 53.0 L34.0 53.0 L35.0 57.8 L36.0 63.3 L37.0 67.4 L38.0 67.2 L39.0 67.6 L40.0 67.4 L41.0 67.1 L42.0 68.0 L43.0 67.8 L44.0 67.0 L45.0 67.6 L46.0 67.5 L47.0 68.1 L48.0 67.8 L49.0 67.0 L50.0 68.2 L51.0 66.7 L52.0 67.2 L53.0 67.8 L54.0 66.6 L55.0 67.2 L56.0 66.4 L57.0 67.5 L58.0 67.6 L59.0 61.7 L60.0 56.6 L61.0 50.0 L62.0 50.7 L63.0 50.5 L64.0 50.4 L65.0 50.2 L66.0 50.8 L67.0 51.0 L68.0 50.1 L69.0 50.4 L70.0 49.3 L71.0 50.4 L72.0 50.3 L73.0 50.9 L74.0 50.5 L75.0 49.5 L76.0 49.7 L77.0 50.1 L78.0 48.9 L79.0 49.7 L80.0 49.1 L81.0 49.0 L82.0 48.9 L83.0 50.1 L84.0 48.9 L85.0 49.1 L86.0 49.4 L87.0 50.2 L88.0 48.7 L89.0 49.4 L90.0 49.5 L91.0 50.1 L92.0 50.0 L93.0 50.0 L94.0 49.0 L95.0 49.2 L96.0 49.1 L97.0 50.0 L98.0 50.1 L99.0 48.6 L100.0 48.7 L101.0 48.8 L102.0 48.8 L103.0 49.2 L104.0 49.4 L105.0 48.8 L106.0 48.3 L107.0 49.1 L108.0 49.0 L109.0 49.3 L110.0 50.0 L111.0 49.5 L112.0 49.2 L113.0 49.4 L114.0 49.5 L115.0 48.4 L116.0 50.0 L117.0 49.8 L118.0 49.9 L119.0 49.8 L120.0 49.1 L121.0 49.1 L122.0 48.6 L123.0 49.6 L124.0 48.6 L125.0 48.6 L126.0 48.9 L127.0 48.8 L128.0 49.2 L129.0 48.7 L130.0 48.6 L131.0 48.9 L132.0 48.9 L133.0 49.4 L134.0 48.8 L135.0 50.4 L136.0 49.9 L137.0 49.1 L138.0 49.3 L139.0 49.5 L140.0 49.6 L141.0 49.2 L142.0 50.5 L143.0 50.8 L144.0 49.9 L145.0 50.0 L146.0 49.3 L147.0 49.4 L148.0 49.8 L149.0 49.7 L150.0 50.8 L151.0 49.6 L152.0 49.4 L153.0 51.1 L154.0 50.4 L155.0 49.7 L156.0 50.5 L157.0 49.6 L158.0 50.5 L159.0 51.3 L160.0 51.2 L161.0 50.9 L162.0 55.7 L163.0 61.5 L164.0 66.7 L165.0 67.8 L166.0 67.4 L167.0 67.9 L168.0 67.1 L169.0 66.9 L170.0 68.0 L171.0 68.3 L172.0 68.1 L173.0 68.0 L174.0 68.0 L175.0 67.9 L176.0 67.0 L177.0 67.5 L178.0 67.2 L179.0 66.7 L180.0 66.6 L181.0 67.1 L182.0 67.1 L183.0 67.8 L184.0 68.3 L185.0 62.5 L186.0 58.5 L187.0 53.6 L188.0 53.6 L189.0 52.5 L190.0 52.2 L191.0 52.2 L192.0 52.2 L193.0 52.2 L194.0 52.9 L195.0 53.4 L196.0 53.2 L197.0 52.6 L198.0 52.9 L199.0 53.1 L200.0 51.8 L201.0 52.8 L202.0 53.2 L203.0 53.0 L204.0 52.9 L205.0 52.4 L206.0 51.8 L207.0 52.9 L208.0 52.0 L209.0 52.8 L210.0 53.1 L211.0 52.0 L212.0 52.0 L213.0 52.9 L214.0 52.5 L215.0 51.5 L216.0 51.4 L217.0 51.4 L218.0 52.7 L219.0 52.5 L220.0 51.3 L221.0 52.4 L222.0 52.7 L223.0 52.1 L224.0 51.5 L225.0 51.8 L226.0 51.0 L227.0 50.8 L228.0 52.5 L229.0 51.9 L230.0 51.6 L231.0 52.3 L232.0 51.4 L233.0 52.2 L234.0 52.0 L235.0 50.9 L236.0 51.0 L237.0 51.0 L238.0 50.9 L239.0 51.5 L240.0 50.9 L241.0 51.2 L242.0 50.6 L243.0 52.0 L244.0 51.0 L245.0 51.2 L246.0 51.4 L247.0 52.0 L248.0 51.1 L249.0 52.0 L250.0 51.2 L251.0 51.3 L252.0 51.2 L253.0 50.3 L254.0 51.1 L255.0 50.6 L256.0 50.3 L257.0 51.8 L258.0 50.6 L259.0 51.2 L260.0 51.6 L261.0 51.4 L262.0 50.9 L263.0 51.3 L264.0 55.6 L265.0 60.3 L266.0 63.3 L267.0 64.2 L268.0 63.6 L269.0 63.7 L270.0 64.6 L271.0 64.1 L272.0 64.3 L273.0 64.7 L274.0 65.0 L275.0 64.1 L276.0 64.5 L277.0 59.2 L278.0 54.2 L279.0 49.5 L280.0 49.1 L281.0 49.3 L282.0 49.2 L283.0 50.1 L284.0 49.7 L285.0 50.0 L286.0 50.2 L287.0 49.0 L288.0 49.6 L289.0 50.3 L290.0 50.1 L291.0 48.9 L292.0 48.9 L293.0 49.5 L294.0 48.9 L295.0 49.2 L296.0 49.0 L297.0 50.1 L298.0 50.3 L299.0 50.6 L300.0 49.2 L301.0 50.3 L302.0 50.2 L303.0 49.3 L304.0 50.7 L305.0 50.9 L306.0 49.5 L307.0 50.9 L308.0 49.9 L309.0 50.1 L310.0 51.0 L311.0 50.8 L312.0 49.6 L313.0 50.1 L314.0 50.2 L315.0 49.9 L316.0 49.7 L317.0 49.9 L318.0 50.7 L319.0 49.4 L320.0 50.4 L321.0 50.2 L322.0 49.4 L323.0 50.0 L324.0 50.5 L325.0 50.3 L326.0 49.5 L327.0 51.2 L328.0 50.8 L329.0 51.1 L330.0 49.6 L331.0 49.9 L332.0 49.4 L333.0 50.8 L334.0 49.8 L335.0 49.6 L336.0 50.1 L337.0 50.9 L338.0 50.8 L339.0 49.7 L340.0 49.5 L341.0 56.3 L342.0 61.0 L343.0 66.6 L344.0 65.5 L345.0 65.4 L346.0 66.5 L347.0 66.0 L348.0 65.4 L349.0 66.9 L350.0 66.3 L351.0 66.6 L352.0 65.3 L353.0 66.6 L354.0 65.2 L355.0 66.6 L356.0 65.8 L357.0 65.6 L358.0 65.9 L359.0 66.5 L360.0 65.3 L361.0 65.0 L362.0 65.7 L363.0 65.2 L364.0 64.9 L365.0 57.7 L366.0 50.3 L367.0 43.3 L368.0 43.4 L369.0 43.4 L370.0 44.2 L371.0 43.3 L372.0 43.6 L373.0 43.0 L374.0 43.3 L375.0 42.7 L376.0 43.1 L377.0 42.6 L378.0 43.9 L379.0 43.5 L380.0 42.9 L381.0 43.3 L382.0 44.2 L383.0 42.6 L384.0 43.9 L385.0 43.2 L386.0 43.3 L387.0 43.9 L388.0 43.1 L389.0 43.3 L390.0 43.6 L391.0 44.1 L392.0 42.9 L393.0 43.8 L394.0 50.8 L395.0 57.9 L396.0 64.7 L397.0 64.6 L398.0 64.1 L399.0 64.2 L400.0 64.1 L401.0 65.3 L402.0 64.5 L403.0 64.3 L404.0 64.2 L405.0 65.6 L406.0 65.6 L407.0 65.3 L408.0 64.6 L409.0 64.5 L410.0 64.6 L411.0 65.0 L412.0 64.4 L413.0 65.0 L414.0 64.7 L415.0 66.0 L416.0 66.0 L417.0 65.3 L418.0 56.8 L419.0 50.3 L420.0 41.2 L421.0 41.3 L422.0 40.7 L423.0 41.4 L424.0 41.6 L425.0 41.7 L426.0 41.2 L427.0 41.8 L428.0 40.9 L429.0 41.4 L430.0 41.1 L431.0 41.7 L432.0 41.1 L433.0 41.1 L434.0 41.7 L435.0 41.6 L436.0 42.2 L437.0 42.2 L438.0 42.6 L439.0 42.5 L440.0 42.6 L441.0 42.9 L442.0 42.1 L443.0 42.0 L444.0 43.2 L445.0 41.8 L446.0 42.8 L447.0 42.7 L448.0 41.6 L449.0 43.1 L450.0 43.2 L451.0 42.8 L452.0 43.0 L453.0 43.2 L454.0 42.0 L455.0 42.7 L456.0 42.7 L457.0 43.3 L458.0 43.2 L459.0 43.3 L460.0 42.9 L461.0 43.5 L462.0 43.1 L463.0 43.1 L464.0 42.3 L465.0 41.9 L466.0 42.1 L467.0 42.5 L468.0 42.1 L469.0 43.4 L470.0 42.9 L471.0 43.0 L472.0 43.0 L473.0 43.1 L474.0 42.8 L475.0 41.9 L476.0 43.3 L477.0 43.2 L478.0 42.8 L479.0 42.8 L480.0 43.0 L481.0 41.9 L482.0 43.1 L483.0 42.2 L484.0 41.9 L485.0 42.2 L486.0 43.0 L487.0 42.1 L488.0 43.0 L489.0 43.4 L490.0 42.5 L491.0 42.3 L492.0 42.4 L493.0 42.8 L494.0 42.9 L495.0 42.6 L496.0 42.6 L497.0 41.5 L498.0 41.6 L499.0 41.8 L500.0 42.6 L501.0 41.8 L502.0 42.3 L503.0 41.2 L504.0 41.3 L505.0 41.6 L506.0 42.3 L507.0 42.3 L508.0 42.2 L509.0 41.5 L510.0 41.9 L511.0 41.8 L512.0 41.7 L513.0 41.1 L514.0 42.4 L515.0 41.1 L516.0 42.5 L517.0 42.4 L518.0 40.7 L519.0 41.5 L520.0 42.1 L521.0 42.4 L522.0 41.4 L523.0 41.0 L524.0 40.9 L525.0 42.2 L526.0 40.9 L527.0 41.5 L528.0 40.7 L529.0 41.4 L530.0 42.1 L531.0 40.6 L532.0 41.8 L533.0 41.3 L534.0 41.9 L535.0 41.6 L536.0 40.7 L537.0 41.9 L538.0 41.2 L539.0 40.4 L540.0 40.3 L541.0 41.2 L542.0 41.1 L543.0 40.8 L544.0 40.6 L545.0 40.9 L546.0 40.9 L547.0 41.8 L548.0 40.3 L549.0 41.7 L550.0 41.9 L551.0 40.6 L552.0 42.0 L553.0 41.7 L554.0 42.0 L555.0 40.9 L556.0 41.1 L557.0 41.2 L558.0 42.3 L559.0 41.6 L560.0 41.2 L561.0 41.3 L562.0 41.1 L563.0 40.7 L564.0 40.8 L565.0 42.2 L566.0 41.2 L567.0 42.4 L568.0 41.2 L569.0 41.3 L570.0 41.7 L571.0 41.2 L572.0 49.5 L573.0 58.4 L574.0 66.3 L575.0 66.2 L576.0 65.9 L577.0 66.4 L578.0 66.5 L579.0 65.8 L580.0 66.2 L581.0 65.0 L582.0 66.3 L583.0 65.8 L584.0 66.4 L585.0 66.2 L586.0 65.6 L587.0 65.2 L588.0 66.8 L589.0 65.4 L590.0 66.0 L591.0 65.8 L592.0 65.8 L593.0 66.6 L594.0 67.1 L595.0 65.8 L596.0 66.5 L597.0 58.7 L598.0 51.9 L599.0 44.4 L600.0 44.1 L601.0 44.1 L602.0 44.2 L603.0 45.4 L604.0 44.7 L605.0 44.2 L606.0 45.5 L607.0 45.7 L608.0 44.7 L609.0 44.1 L610.0 44.2 L611.0 44.1 L612.0 44.5 L613.0 44.1 L614.0 44.3 L615.0 44.4 L616.0 44.9 L617.0 45.5 L618.0 45.2 L619.0 44.6 L620.0 44.6 L621.0 44.8 L622.0 44.5 L623.0 44.5 L624.0 43.9 L625.0 44.3 L626.0 45.5 L627.0 44.0 L628.0 44.7 L629.0 44.9 L630.0 45.3 L631.0 44.1 L632.0 44.2 L633.0 44.1 L634.0 44.3 L635.0 44.4 L636.0 45.3 L637.0 45.1 L638.0 45.1 L639.0 43.5 L640.0 43.5 L641.0 44.7 L642.0 45.0 L643.0 44.2 L644.0 44.4 L645.0 43.3 L646.0 44.0 L647.0 44.9 L648.0 44.7 L649.0 44.7 L650.0 44.9 L651.0 43.5 L652.0 43.2 L653.0 43.3 L654.0 43.9 L655.0 44.2 L656.0 44.6 L657.0 44.2 L658.0 44.0 L659.0 44.2 L660.0 43.6 L661.0 43.7 L662.0 42.8 L663.0 44.1 L664.0 43.1 L665.0 44.3 L666.0 43.8 L667.0 43.1 L668.0 42.8 L669.0 43.0 L670.0 43.6 L671.0 43.7 L672.0 42.7 L673.0 42.6 L674.0 43.4 L675.0 49.4 L676.0 55.1 L677.0 60.8 L678.0 61.4 L679.0 60.4 L680.0 60.9 L681.0 61.2 L682.0 62.0 L683.0 61.5 L684.0 61.9 L685.0 61.2 L686.0 60.7 L687.0 60.7 L688.0 54.9 L689.0 47.3 L690.0 39.5 L691.0 39.0 L692.0 39.8 L693.0 40.1 L694.0 39.7 L695.0 39.4 L696.0 40.2 L697.0 40.6 L698.0 39.4 L699.0 39.1 L700.0 39.6 L701.0 39.8 L702.0 40.3 L703.0 39.5 L704.0 40.6 L705.0 40.5 L706.0 40.1 L707.0 39.6 L708.0 41.0 L709.0 39.8 L710.0 40.8 L711.0 39.7 L712.0 39.7 L713.0 40.7 L714.0 39.9 L715.0 41.2 L716.0 40.4 L717.0 39.8 L718.0 39.9 L719.0 40.3 L720.0 40.8 L721.0 41.4 L722.0 39.9 L723.0 40.4 L724.0 40.1 L725.0 41.5 L726.0 40.1 L727.0 39.9 L728.0 40.0 L729.0 40.6 L730.0 41.6 L731.0 41.6 L732.0 41.3 L733.0 41.8 L734.0 40.9 L735.0 39.0 L736.0 37.9 L737.0 39.3 L738.0 38.9 L739.0 37.7 L740.0 38.8 L741.0 38.4 L742.0 38.4 L743.0 38.3 L744.0 38.0 L745.0 37.8 L746.0 38.3 L747.0 38.4 L748.0 39.5 L749.0 38.1 L750.0 39.6 L751.0 38.2 L752.0 38.5 L753.0 39.4 L754.0 39.4 L755.0 38.7 L756.0 38.0 L757.0 38.8 L758.0 38.6 L759.0 39.6 L760.0 38.2 L761.0 38.6 L762.0 39.5 L763.0 37.9 L764.0 38.6 L765.0 39.3 L766.0 39.2 L767.0 37.9 L768.0 37.9 L769.0 37.9 L770.0 39.5 L771.0 38.3 L772.0 39.1 L773.0 39.4 L774.0 38.3 L775.0 38.2 L776.0 39.4 L777.0 38.8 L778.0 38.1 L779.0 38.9 L780.0 38.2 L781.0 38.0 L782.0 37.5 L783.0 38.9 L784.0 39.1 L785.0 38.6 L786.0 39.1 L787.0 37.4 L788.0 37.8 L789.0 38.2 L790.0 39.0 L791.0 38.9 L792.0 37.9 L793.0 37.6 L794.0 37.9 L795.0 38.0 L796.0 38.7 L797.0 37.4 L798.0 38.4 L799.0 38.3 L800.0 38.4 L801.0 38.3 L802.0 37.9 L803.0 37.4 L804.0 37.4 L805.0 37.4 L806.0 38.1 L807.0 36.8 L808.0 37.0 L809.0 38.0 L810.0 37.1 L811.0 36.7 L812.0 36.6 L813.0 37.5 L814.0 37.1 L815.0 38.2 L816.0 38.1 L817.0 38.2 L818.0 36.9 L819.0 36.6 L820.0 36.6 L821.0 37.3 L822.0 37.6 L823.0 37.2 L824.0 36.8 L825.0 37.1 L826.0 37.4 L827.0 37.5 L828.0 37.7 L829.0 37.8 L830.0 37.5 L831.0 36.5 L832.0 37.8 L833.0 36.8 L834.0 37.3 L835.0 37.0 L836.0 37.6 L837.0 36.7 L838.0 36.8 L839.0 36.8 L840.0 36.6 L841.0 38.0 L842.0 37.4 L843.0 37.0 L844.0 37.1 L845.0 38.2 L846.0 37.4 L847.0 36.9 L848.0 38.0 L849.0 37.7 L850.0 38.3 L851.0 36.8 L852.0 37.5 L853.0 38.1 L854.0 38.2 L855.0 38.3 L856.0 45.1 L857.0 54.0 L858.0 62.0 L859.0 62.2 L860.0 63.6 L861.0 62.9 L862.0 63.6 L863.0 62.6 L864.0 63.6 L865.0 62.8 L866.0 62.5 L867.0 63.5 L868.0 63.8 L869.0 62.4 L870.0 63.3 L871.0 63.4 L872.0 62.7 L873.0 63.0 L874.0 62.6 L875.0 62.7 L876.0 62.9 L877.0 63.5 L878.0 63.6 L879.0 62.9 L880.0 62.5 L881.0 54.8 L882.0 47.1 L883.0 37.9 L884.0 38.2 L885.0 38.0 L886.0 39.1 L887.0 38.7 L888.0 37.8 L889.0 37.9 L890.0 38.5 L891.0 38.8 L892.0 39.0 L893.0 38.0 L894.0 38.1 L895.0 39.1 L896.0 38.6 L897.0 38.4 L898.0 38.4 L899.0 39.6 L900.0 38.5 L901.0 38.9 L902.0 38.5 L903.0 38.6 L904.0 39.5 L905.0 39.7 L906.0 38.5 L907.0 38.2 L908.0 39.2 L909.0 38.2 L910.0 37.9 L911.0 39.5 L912.0 38.6 L913.0 39.3 L914.0 38.5 L915.0 39.4 L916.0 38.6 L917.0 38.1 L918.0 37.8 L919.0 38.7 L920.0 38.8 L921.0 39.3 L922.0 37.8 L923.0 38.7 L924.0 38.3 L925.0 38.5 L926.0 37.8 L927.0 38.0 L928.0 38.4 L929.0 39.1 L930.0 37.6 L931.0 38.3 L932.0 38.8 L933.0 39.1 L934.0 37.6 L935.0 37.5 L936.0 38.9 L937.0 38.9 L938.0 38.0 L939.0 37.2 L940.0 38.7 L941.0 37.7 L942.0 38.6 L943.0 38.1 L944.0 38.4 L945.0 37.2 L946.0 38.3 L947.0 37.2 L948.0 37.5 L949.0 38.3 L950.0 38.2 L951.0 37.0 L952.0 37.1 L953.0 37.4 L954.0 37.6 L955.0 37.3 L956.0 36.8 L957.0 37.0 L958.0 37.8 L959.0 38.1 L960.0 36.5 L961.0 37.5 L962.0 37.8 L963.0 36.5 L964.0 37.9 L965.0 36.6 L966.0 37.4 L967.0 37.3 L968.0 37.5 L969.0 36.9 L970.0 37.1 L971.0 37.4 L972.0 37.1 L973.0 37.5 L974.0 37.1 L975.0 37.1 L976.0 36.3 L977.0 37.4 L978.0 37.2 L979.0 36.7 L980.0 37.7 L981.0 37.7 L982.0 37.2 L983.0 36.7 L984.0 44.8 L985.0 51.7 L986.0 59.3 L987.0 59.9 L988.0 59.3 L989.0 59.9 L990.0 60.1 L991.0 59.2 L992.0 60.3 L993.0 59.4 L994.0 60.6 L995.0 60.7 L996.0 60.2 L997.0 59.4 L998.0 60.3 L999.0 60.1 L1000.0 61.1 L1001.0 59.7 L1002.0 61.0 L1003.0 61.3 L1004.0 60.9 L1005.0 61.0 L1006.0 60.0 L1007.0 61.4 L1008.0 60.6 L1009.0 53.5 L1010.0 45.6 L1011.0 36.4 L1012.0 37.5 L1013.0 37.8 L1014.0 36.3 L1015.0 36.8 L1016.0 37.6 L1017.0 36.6 L1018.0 37.9 L1019.0 36.8 L1020.0 37.9 L1021.0 36.7 L1022.0 37.4 L1023.0 38.1 L1024.0 36.9 L1025.0 37.0 L1026.0 37.5 L1027.0 37.2 L1028.0 36.7 L1029.0 37.0 L1030.0 37.0 L1031.0 38.4 L1032.0 37.9 L1033.0 38.4 L1034.0 37.1 L1035.0 38.2 L1036.0 37.0 L1037.0 37.8 L1038.0 38.0 L1039.0 37.5 L1040.0 38.4 L1041.0 37.9 L1042.0 37.9 L1043.0 38.5 L1044.0 37.1 L1045.0 38.7 L1046.0 38.0 L1047.0 37.6 L1048.0 38.3 L1049.0 37.4 L1050.0 38.7 L1051.0 37.9 L1052.0 37.5 L1053.0 38.3 L1054.0 37.7 L1055.0 37.2 L1056.0 38.2 L1057.0 36.9 L1058.0 38.3 L1059.0 37.3 L1060.0 37.9 L1061.0 38.5 L1062.0 37.8 L1063.0 37.9 L1064.0 37.3 L1065.0 36.7 L1066.0 36.7 L1067.0 36.9 L1068.0 37.7 L1069.0 37.4 L1070.0 37.5 L1071.0 38.1 L1072.0 36.7 L1073.0 36.9 L1074.0 37.6 L1075.0 36.4 L1076.0 36.4 L1077.0 37.0 L1078.0 36.5 L1079.0 36.9 L1080.0 36.6 L1081.0 37.2 L1082.0 37.2 L1083.0 36.5 L1084.0 37.2 L1085.0 36.9 L1086.0 36.3 L1087.0 44.7 L1088.0 50.4 L1089.0 57.2 L1090.0 57.1 L1091.0 58.0 L1092.0 58.4 L1093.0 58.2 L1094.0 57.5 L1095.0 57.2 L1096.0 56.7 L1097.0 57.8 L1098.0 57.7 L1099.0 49.8 L1100.0 42.8 L1101.0 35.0 L1102.0 35.8 L1103.0 35.4 L1104.0 34.5 L1105.0 35.7 L1106.0 34.1 L1107.0 35.0 L1108.0 34.7 L1109.0 34.4 L1110.0 34.1 L1111.0 35.4 L1112.0 34.0 L1113.0 34.9 L1114.0 35.6 L1115.0 34.2 L1116.0 34.3 L1117.0 35.0 L1118.0 34.8 L1119.0 35.1 L1120.0 35.4 L1121.0 34.2 L1122.0 34.5 L1123.0 34.4 L1124.0 34.0 L1125.0 35.5 L1126.0 35.3 L1127.0 35.2 L1128.0 34.0 L1129.0 35.5 L1130.0 35.3 L1131.0 34.8 L1132.0 35.3 L1133.0 34.8 L1134.0 34.5 L1135.0 34.3 L1136.0 34.5 L1137.0 34.2 L1138.0 34.7 L1139.0 35.5 L1140.0 35.4 L1141.0 35.7 L1142.0 35.5 L1143.0 34.7 L1144.0 35.3 L1145.0 35.1 L1146.0 35.8 L1147.0 35.3 L1148.0 34.9 L1149.0 35.6 L1150.0 36.2 L1151.0 34.9 L1152.0 36.1 L1153.0 34.6 L1154.0 35.1 L1155.0 35.1 L1156.0 36.0 L1157.0 36.4 L1158.0 36.1 L1159.0 35.4 L1160.0 36.4 L1161.0 35.5 L1162.0 41.5 L1163.0 48.8 L1164.0 54.5 L1165.0 54.6 L1166.0 54.6 L1167.0 55.2 L1168.0 54.3 L1169.0 55.0 L1170.0 54.8 L1171.0 55.1 L1172.0 54.4 L1173.0 54.9 L1174.0 54.7 L1175.0 54.2 L1176.0 54.1 L1177.0 54.9 L1178.0 53.9 L1179.0 55.4 L1180.0 54.0 L1181.0 53.9 L1182.0 54.0 L1183.0 55.5 L1184.0 54.5 L1185.0 54.1 L1186.0 53.9 L1187.0 54.0 L1188.0 55.1 L1189.0 55.0 L1190.0 49.0 L1191.0 43.0 L1192.0 35.6 L1193.0 36.6 L1194.0 36.2 L1195.0 37.0 L1196.0 37.0 L1197.0 37.1 L1198.0 35.6 L1199.0 37.0 L1200.0 37.1 L1201.0 37.1 L1202.0 35.6 L1203.0 35.8 L1204.0 35.6 L1205.0 35.4 L1206.0 36.9 L1207.0 36.8 L1208.0 36.5 L1209.0 36.8 L1210.0 36.4 L1211.0 35.8 L1212.0 35.4 L1213.0 35.4 L1214.0 36.5 L1215.0 35.5 L1216.0 35.7 L1217.0 43.3 L1218.0 50.0 L1219.0 57.9 L1220.0 57.9 L1221.0 58.6 L1222.0 58.0 L1223.0 57.9 L1224.0 59.0 L1225.0 58.1 L1226.0 58.7 L1227.0 58.3 L1228.0 57.2 L1229.0 57.8 L1230.0 57.8 L1231.0 58.4 L1232.0 57.6 L1233.0 58.2 L1234.0 57.9 L1235.0 57.3 L1236.0 58.4 L1237.0 57.0 L1238.0 58.3 L1239.0 57.0 L1240.0 49.7 L1241.0 43.0 L1242.0 37.0 L1243.0 37.4 L1244.0 35.6 L1245.0 36.5 L1246.0 36.4 L1247.0 37.0 L1248.0 35.8 L1249.0 36.4 L1250.0 36.1 L1251.0 36.9 L1252.0 35.9 L1253.0 37.1 L1254.0 35.9 L1255.0 35.8 L1256.0 36.6 L1257.0 36.2 L1258.0 35.5 L1259.0 36.5 L1260.0 35.5 L1261.0 36.7 L1262.0 36.6 L1263.0 36.7 L1264.0 36.4 L1265.0 35.9 L1266.0 36.0 L1267.0 36.0 L1268.0 36.9 L1269.0 35.5 L1270.0 36.9 L1270 70.7z" fill="#788a95"/></svg><svg style="left:14px;top:29.5px;" width="16" height="17" viewBox="0 0 16 17"><path d="M5.2 13 V2.6 L14.4 0.8 V11" fill="none" stroke="#ececec" stroke-width="1.7"/><path d="M5.2 3.2 L14.4 1.4 v2.4 L5.2 5.6z" fill="#ececec"/><ellipse cx="3.4" cy="13.2" rx="2.7" ry="2.1" fill="#ececec"/><ellipse cx="12.6" cy="11.2" rx="2.7" ry="2.1" fill="#ececec"/></svg><div style="left:35.6px;top:27px;height:20px;line-height:20px;font-size:12.9px;color:#ececec;white-space:nowrap;letter-spacing:-0.05px;-webkit-text-stroke:.75px #ececec;">audio_01</div></div>
<div style="left:760.8px;top:724px;width:1px;height:228.5px;background:#cfcfcf"></div>
<svg style="left:753.3px;top:714.8px;" width="15" height="15" viewBox="0 0 15 15"><path d="M1.6 0.4 h11.4 a1 1 0 0 1 1 1 v5.6 c0 3 -3.600 5.200 -6.700 7.400 c-3.100 -2.200 -6.700 -4.400 -6.700 -7.400 v-5.600 a1 1 0 0 1 1 -1z" fill="#d4d4d4"/></svg>
</div></body></html>
